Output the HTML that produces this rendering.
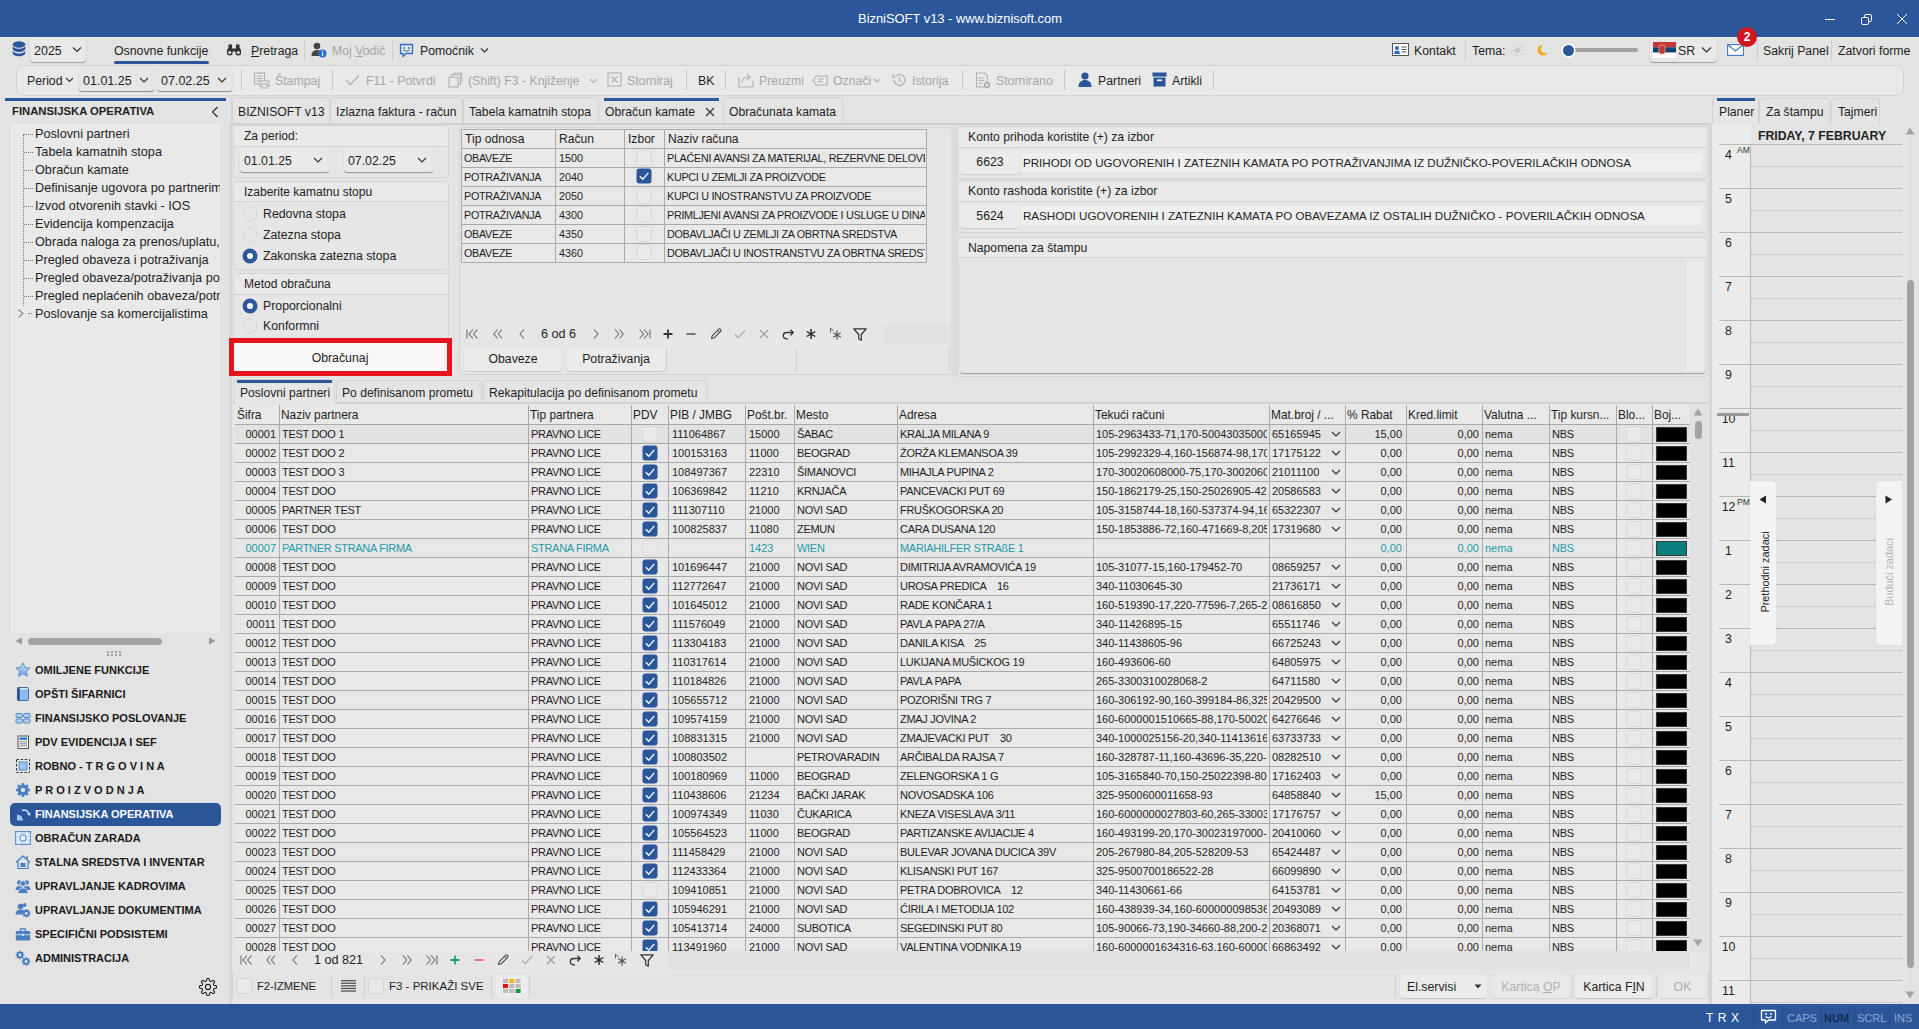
<!DOCTYPE html><html><head><meta charset="utf-8"><style>
html,body{margin:0;padding:0;}
body{width:1919px;height:1029px;position:relative;overflow:hidden;background:#e3e3e3;font-family:"Liberation Sans",sans-serif;font-size:12px;color:#1e1e1e;}
div{position:absolute;box-sizing:border-box;}
.t{white-space:nowrap;line-height:16px;height:16px;}
.dis{color:#a6a6a6;}
.g{font-size:11px;}
.cap{letter-spacing:-0.3px;}
.b{font-weight:bold;}
svg{overflow:visible;}
</style></head><body><div style="left:0px;top:0px;width:1919px;height:37px;background:#2b579a;"></div>
<div class="t" style="left:760px;top:11px;width:400px;text-align:center;color:#fff;font-size:12.9px;">BizniSOFT v13 - www.biznisoft.com</div>
<svg style="position:absolute;left:1824px;top:18px;" width="12" height="3" viewBox="0 0 12 3"><line x1="1" y1="1.5" x2="11" y2="1.5" stroke="#fff" stroke-width="1"/></svg>
<svg style="position:absolute;left:1860px;top:13px;" width="13" height="13" viewBox="0 0 13 13"><rect x="1.5" y="4.5" width="7" height="7" rx="1.3" fill="none" stroke="#fff" stroke-width="1"/><path d="M4.5 4.3V2.8a1.3 1.3 0 0 1 1.3-1.3h4.4a1.3 1.3 0 0 1 1.3 1.3v4.4a1.3 1.3 0 0 1-1.3 1.3H8.7" fill="none" stroke="#fff" stroke-width="1"/></svg>
<svg style="position:absolute;left:1896px;top:13px;" width="12" height="12" viewBox="0 0 12 12"><path d="M1 1L11 11M11 1L1 11" stroke="#fff" stroke-width="1"/></svg>
<div style="left:0px;top:37px;width:1919px;height:1px;background:#eeebe4;"></div>
<svg style="position:absolute;left:12px;top:41px;" width="15" height="16" viewBox="0 0 15 16"><ellipse cx="7" cy="3.5" rx="6.3" ry="3.2" fill="#2b579a"/><path d="M0.7 4.5v3.3c0 1.8 2.8 3.2 6.3 3.2s6.3-1.4 6.3-3.2V4.5c0 1.8-2.8 3.2-6.3 3.2S0.7 6.3 0.7 4.5z" fill="#2b579a"/><path d="M0.7 9.3v2.8c0 1.8 2.8 3.2 6.3 3.2s6.3-1.4 6.3-3.2V9.3c0 1.8-2.8 3.2-6.3 3.2S0.7 11.1 0.7 9.3z" fill="#2b579a"/></svg>
<div style="left:30px;top:38px;width:56px;height:24px;background:#e8e8e8;border-radius:4px;box-shadow:0 1px 1px #9a9a9a;"></div>
<div class="t" style="left:34px;top:42.8px;font-size:12.5px;">2025</div>
<svg style="position:absolute;left:72px;top:46px;" width="10" height="7" viewBox="0 0 10 7"><path d="M1 1.5L5 5.5L9 1.5" fill="none" stroke="#333" stroke-width="1.2"/></svg>
<div class="t" style="left:114px;top:42.8px;font-size:12.3px;">Osnovne funkcije</div>
<div style="left:114px;top:61px;width:95px;height:3px;background:#2b579a;border-radius:2px;"></div>
<svg style="position:absolute;left:226px;top:44px;" width="16" height="12" viewBox="0 0 16 12"><rect x="1" y="4" width="5.5" height="7.5" rx="2.5" fill="#333"/><rect x="9.5" y="4" width="5.5" height="7.5" rx="2.5" fill="#333"/><rect x="2.5" y="0.5" width="3.5" height="5" fill="#333"/><rect x="10" y="0.5" width="3.5" height="5" fill="#333"/><rect x="6" y="4.5" width="4" height="3" fill="#333"/><circle cx="3.7" cy="8.5" r="1.6" fill="#ddd"/><circle cx="12.3" cy="8.5" r="1.6" fill="#ddd"/></svg>
<div class="t" style="left:251px;top:42.8px;font-size:12.3px;"><u>P</u>retraga</div>
<div style="left:304px;top:40px;width:1px;height:21px;background:#cdcdcd;"></div>
<svg style="position:absolute;left:311px;top:42px;" width="16" height="16" viewBox="0 0 16 16"><circle cx="6" cy="4" r="3.3" fill="#444"/><path d="M0.5 14c0-4 2.5-6 5.5-6s4 1 4.5 2v4z" fill="#444"/><circle cx="11.5" cy="11.5" r="4" fill="#1e73d8"/><rect x="11" y="10.5" width="1.1" height="3.5" fill="#fff"/><rect x="11" y="8.8" width="1.1" height="1.1" fill="#fff"/></svg>
<div class="t dis" style="left:332px;top:42.8px;font-size:12.3px;">Moj <u>V</u>odič</div>
<div style="left:392px;top:40px;width:1px;height:21px;background:#cdcdcd;"></div>
<svg style="position:absolute;left:399px;top:43px;" width="15" height="15" viewBox="0 0 15 15"><path d="M1.5 1.5h12v9h-6.5l-3 3v-3h-2.5z" fill="none" stroke="#2b6cc4" stroke-width="1.3" stroke-linejoin="round"/><circle cx="5" cy="5" r="0.9" fill="#2b6cc4"/><circle cx="10" cy="5" r="0.9" fill="#2b6cc4"/><path d="M4.5 7.2q3 2 6 0" fill="none" stroke="#2b6cc4" stroke-width="1"/></svg>
<div class="t" style="left:420px;top:42.8px;font-size:12.3px;">Pomoćnik</div>
<svg style="position:absolute;left:480px;top:47px;" width="10" height="7" viewBox="0 0 10 7"><path d="M1 1.5L4.5 5L8 1.5" fill="none" stroke="#333" stroke-width="1.2"/></svg>
<svg style="position:absolute;left:1392px;top:43px;" width="17" height="13" viewBox="0 0 17 13"><rect x="0.5" y="0.5" width="16" height="12" fill="#fff" stroke="#555" stroke-width="1"/><circle cx="5" cy="5" r="2" fill="#2b6cc4"/><path d="M2 11c0-2.5 1.5-3.5 3-3.5s3 1 3 3.5z" fill="#2b6cc4"/><rect x="9.5" y="3.5" width="5" height="1" fill="#555"/><rect x="9.5" y="6" width="5" height="1" fill="#555"/><rect x="9.5" y="8.5" width="5" height="1" fill="#555"/></svg>
<div class="t" style="left:1414px;top:42.8px;font-size:12.3px;">Kontakt</div>
<div style="left:1465px;top:40px;width:1px;height:21px;background:#cdcdcd;"></div>
<div class="t" style="left:1472px;top:42.8px;font-size:12.3px;">Tema:</div>
<svg style="position:absolute;left:1511px;top:44px;" width="13" height="13" viewBox="0 0 13 13"><circle cx="6.5" cy="6.5" r="2.6" fill="#c8c8c8"/><line x1="10.50" y1="6.50" x2="12.50" y2="6.50" stroke="#c8c8c8" stroke-width="1.2"/><line x1="9.33" y1="9.33" x2="10.74" y2="10.74" stroke="#c8c8c8" stroke-width="1.2"/><line x1="6.50" y1="10.50" x2="6.50" y2="12.50" stroke="#c8c8c8" stroke-width="1.2"/><line x1="3.67" y1="9.33" x2="2.26" y2="10.74" stroke="#c8c8c8" stroke-width="1.2"/><line x1="2.50" y1="6.50" x2="0.50" y2="6.50" stroke="#c8c8c8" stroke-width="1.2"/><line x1="3.67" y1="3.67" x2="2.26" y2="2.26" stroke="#c8c8c8" stroke-width="1.2"/><line x1="6.50" y1="2.50" x2="6.50" y2="0.50" stroke="#c8c8c8" stroke-width="1.2"/><line x1="9.33" y1="3.67" x2="10.74" y2="2.26" stroke="#c8c8c8" stroke-width="1.2"/></svg>
<svg style="position:absolute;left:1536px;top:44px;" width="12" height="12" viewBox="0 0 12 12"><path d="M7 1A5.2 5.2 0 1 0 11.5 8.5A4.3 4.3 0 0 1 7 1z" fill="#f5a623"/></svg>
<div style="left:1568px;top:48px;width:70px;height:4px;background:#a0a0a0;border-radius:2px;"></div>
<div style="left:1563px;top:45px;width:11px;height:11px;background:#2b579a;border-radius:50%;box-shadow:0 0 0 1.5px #fff;"></div>
<div style="left:1650px;top:38px;width:67px;height:24px;background:#e8e8e8;border-radius:4px;box-shadow:0 1px 1px #9a9a9a;"></div>
<svg style="position:absolute;left:1653px;top:42px;" width="23" height="16" viewBox="0 0 23 16"><rect width="23" height="5.4" fill="#c6363c"/><rect y="5.3" width="23" height="5.4" fill="#0c4076"/><rect y="10.6" width="23" height="5.4" fill="#fff"/><rect x="6" y="3" width="6" height="9" rx="2" fill="#c6363c" stroke="#e8c35a" stroke-width="0.7"/></svg>
<div class="t" style="left:1678px;top:42.8px;font-size:12.3px;">SR</div>
<svg style="position:absolute;left:1701px;top:46px;" width="11" height="8" viewBox="0 0 11 8"><path d="M1 1.5L5.5 6L10 1.5" fill="none" stroke="#333" stroke-width="1.2"/></svg>
<svg style="position:absolute;left:1727px;top:44px;" width="17" height="12" viewBox="0 0 17 12"><rect x="0.6" y="0.6" width="15.8" height="10.8" fill="#fff" stroke="#3e78c8" stroke-width="1.1"/><path d="M0.8 0.8L8.5 7L16.2 0.8" fill="none" stroke="#3e78c8" stroke-width="1.1"/></svg>
<div style="left:1737px;top:27px;width:20px;height:20px;background:#d0171f;border-radius:50%;"></div>
<div class="t" style="left:1737px;top:29px;width:20px;text-align:center;color:#fff;font-weight:bold;font-size:12px;">2</div>
<div style="left:1757px;top:40px;width:1px;height:21px;background:#cdcdcd;"></div>
<div class="t" style="left:1763px;top:42.8px;font-size:12.3px;">Sakrij Panel</div>
<div style="left:1831px;top:40px;width:1px;height:21px;background:#cdcdcd;"></div>
<div class="t" style="left:1838px;top:42.8px;font-size:12.3px;">Zatvori forme</div>
<div style="left:16px;top:65px;width:1888px;height:31px;background:#e9e9e9;border:1px solid #d3d3d3;border-radius:8px;"></div>
<div class="t" style="left:27px;top:73px;font-size:12.3px;">Period</div>
<svg style="position:absolute;left:65px;top:77px;" width="9" height="6" viewBox="0 0 9 6"><path d="M1 1L4.5 4.5L8 1" fill="none" stroke="#333" stroke-width="1.1"/></svg>
<div style="left:79px;top:68px;width:75px;height:23px;background:#e6e6e6;border-radius:3px;box-shadow:0 1px 1px #8a8a8a;"></div>
<div class="t" style="left:83px;top:73px;font-size:12.5px;">01.01.25</div>
<svg style="position:absolute;left:139px;top:77px;" width="10" height="7" viewBox="0 0 10 7"><path d="M1 1L5 5L9 1" fill="none" stroke="#333" stroke-width="1.2"/></svg>
<div style="left:157px;top:68px;width:75px;height:23px;background:#e6e6e6;border-radius:3px;box-shadow:0 1px 1px #8a8a8a;"></div>
<div class="t" style="left:161px;top:73px;font-size:12.5px;">07.02.25</div>
<svg style="position:absolute;left:217px;top:77px;" width="10" height="7" viewBox="0 0 10 7"><path d="M1 1L5 5L9 1" fill="none" stroke="#333" stroke-width="1.2"/></svg>
<div style="left:241px;top:70px;width:1px;height:20px;background:#c8c8c8;"></div>
<svg style="position:absolute;left:253px;top:72px;" width="17" height="17" viewBox="0 0 17 17"><rect x="1.5" y="1" width="10" height="11" fill="none" stroke="#b0b0b0" stroke-width="1.1"/><path d="M3.5 4h6M3.5 6.5h6M3.5 9h4" stroke="#b0b0b0"/><rect x="7" y="9" width="9" height="5" fill="#e9e9e9" stroke="#b0b0b0" stroke-width="1.1"/><rect x="9" y="12" width="5" height="4" fill="#e9e9e9" stroke="#b0b0b0"/></svg>
<div class="t dis" style="left:275px;top:73px;font-size:12.3px;">Štampaj</div>
<div style="left:332px;top:70px;width:1px;height:20px;background:#c8c8c8;"></div>
<svg style="position:absolute;left:345px;top:74px;" width="15" height="12" viewBox="0 0 15 12"><path d="M1 6L5.5 10.5L14 1.5" fill="none" stroke="#b0b0b0" stroke-width="1.3"/></svg>
<div class="t dis" style="left:366px;top:73px;font-size:12.3px;">F11 - Potvrdi</div>
<svg style="position:absolute;left:448px;top:72px;" width="15" height="16" viewBox="0 0 15 16"><rect x="1" y="5" width="9" height="10" fill="none" stroke="#b0b0b0" stroke-width="1.1"/><path d="M3.5 5V2.5h9v10h-2.5" fill="none" stroke="#b0b0b0" stroke-width="1.1"/><path d="M6 3V1h8v9" fill="none" stroke="#b0b0b0" stroke-width="0.9"/></svg>
<div class="t dis" style="left:468px;top:73px;font-size:12.3px;">(Shift) F3 - Knjiženje</div>
<svg style="position:absolute;left:589px;top:78px;" width="9" height="6" viewBox="0 0 9 6"><path d="M1 1L4.5 4.5L8 1" fill="none" stroke="#b0b0b0" stroke-width="1.1"/></svg>
<svg style="position:absolute;left:607px;top:72px;" width="15" height="15" viewBox="0 0 15 15"><rect x="1" y="1" width="13" height="13" fill="none" stroke="#b0b0b0" stroke-width="1.1"/><path d="M4.5 4.5L10.5 10.5M10.5 4.5L4.5 10.5" stroke="#b0b0b0" stroke-width="1.1"/></svg>
<div class="t dis" style="left:627px;top:73px;font-size:12.3px;">Storniraj</div>
<div style="left:686px;top:70px;width:1px;height:20px;background:#c8c8c8;"></div>
<div class="t" style="left:698px;top:73px;font-size:12.3px;">BK</div>
<div style="left:725px;top:70px;width:1px;height:20px;background:#c8c8c8;"></div>
<svg style="position:absolute;left:738px;top:72px;" width="16" height="16" viewBox="0 0 16 16"><path d="M1 5v10h14V9" fill="none" stroke="#b0b0b0" stroke-width="1.1"/><path d="M4 11c0-4 3-6 7-6" fill="none" stroke="#b0b0b0" stroke-width="1.1"/><path d="M9 2l3 3-3 3" fill="none" stroke="#b0b0b0" stroke-width="1.1"/></svg>
<div class="t dis" style="left:759px;top:73px;font-size:12.3px;">Preuzmi</div>
<svg style="position:absolute;left:812px;top:73px;" width="17" height="13" viewBox="0 0 17 13"><path d="M4 3h11v9H4L1 7.5z" fill="none" stroke="#b0b0b0" stroke-width="1.1"/><path d="M6 6h6M6 8.5h5" stroke="#b0b0b0"/></svg>
<div class="t dis" style="left:833px;top:73px;font-size:12.3px;">Označi</div>
<svg style="position:absolute;left:873px;top:78px;" width="8" height="6" viewBox="0 0 8 6"><path d="M1 1L4 4L7 1" fill="none" stroke="#b0b0b0" stroke-width="1.1"/></svg>
<svg style="position:absolute;left:891px;top:72px;" width="16" height="16" viewBox="0 0 16 16"><path d="M3 8a5.5 5.5 0 1 0 1.6-3.9" fill="none" stroke="#b0b0b0" stroke-width="1.3"/><path d="M2 2v3.5h3.5" fill="none" stroke="#b0b0b0" stroke-width="1.2"/><path d="M8.5 5v3.5l2.5 1.5" fill="none" stroke="#b0b0b0" stroke-width="1.2"/></svg>
<div class="t dis" style="left:912px;top:73px;font-size:12.3px;">Istorija</div>
<div style="left:962px;top:70px;width:1px;height:20px;background:#c8c8c8;"></div>
<svg style="position:absolute;left:975px;top:72px;" width="16" height="17" viewBox="0 0 16 17"><path d="M1.5 1h8l3 3v11h-11z" fill="none" stroke="#b0b0b0" stroke-width="1.1"/><path d="M3.5 6h6M3.5 8.5h6M3.5 11h4" stroke="#b0b0b0"/><circle cx="12" cy="13" r="3.2" fill="#b0b0b0"/><path d="M10.7 11.7l2.6 2.6M13.3 11.7l-2.6 2.6" stroke="#fff" stroke-width="0.9"/></svg>
<div class="t dis" style="left:996px;top:73px;font-size:12.3px;">Stornirano</div>
<div style="left:1064px;top:70px;width:1px;height:20px;background:#c8c8c8;"></div>
<svg style="position:absolute;left:1078px;top:72px;" width="14" height="15" viewBox="0 0 14 15"><circle cx="7" cy="4" r="3.6" fill="#2b579a"/><path d="M0.5 15c0-5 3-7 6.5-7s6.5 2 6.5 7z" fill="#2b579a"/></svg>
<div class="t" style="left:1098px;top:73px;font-size:12.3px;">Partneri</div>
<svg style="position:absolute;left:1152px;top:72px;" width="15" height="15" viewBox="0 0 15 15"><rect x="0.5" y="0.5" width="14" height="4" fill="#2b579a"/><rect x="1.5" y="5.5" width="12" height="9" fill="#2b579a"/><rect x="5" y="7.5" width="5" height="1.6" fill="#fff"/></svg>
<div class="t" style="left:1172px;top:73px;font-size:12.3px;">Artikli</div>
<div style="left:1213px;top:70px;width:1px;height:20px;background:#c8c8c8;"></div>
<div style="left:0px;top:1004px;width:1919px;height:25px;background:#2b579a;"></div>
<div class="t" style="left:1706px;top:1010px;color:#fff;font-size:12px;letter-spacing:0.6px;">T&nbsp;R&nbsp;X</div>
<div style="left:1753px;top:1006px;width:1px;height:22px;background:#234a84;"></div>
<svg style="position:absolute;left:1760px;top:1009px;" width="17" height="17" viewBox="0 0 17 17"><path d="M1.5 1.5h14v9.5h-7l-3 3v-3h-4z" fill="none" stroke="#fff" stroke-width="1.3" stroke-linejoin="round"/><circle cx="6" cy="5" r="1" fill="#fff"/><circle cx="11" cy="5" r="1" fill="#fff"/><path d="M5.5 7.5q3 2.2 6 0" fill="none" stroke="#fff" stroke-width="1.1"/></svg>
<div style="left:1782px;top:1006px;width:1px;height:22px;background:#234a84;"></div>
<div class="t" style="left:1787px;top:1010px;font-size:11px;color:#8fa8cf;">CAPS</div>
<div style="left:1821px;top:1006px;width:1px;height:22px;background:#234a84;"></div>
<div class="t" style="left:1824px;top:1010px;font-size:11px;color:#0a1a33;">NUM</div>
<div style="left:1854px;top:1006px;width:1px;height:22px;background:#234a84;"></div>
<div class="t" style="left:1857px;top:1010px;font-size:11px;color:#8fa8cf;">SCRL</div>
<div style="left:1889px;top:1006px;width:1px;height:22px;background:#234a84;"></div>
<div class="t" style="left:1894px;top:1010px;font-size:11px;color:#8fa8cf;">INS</div>
<div style="left:5px;top:98px;width:221px;height:3px;background:#2b579a;"></div>
<div class="t" style="left:12px;top:103px;font-size:11.3px;font-weight:bold;color:#222;">FINANSIJSKA OPERATIVA</div>
<svg style="position:absolute;left:211px;top:106px;" width="8" height="12" viewBox="0 0 8 12"><path d="M6.5 1L1.5 6L6.5 11" fill="none" stroke="#333" stroke-width="1.2"/></svg>
<div style="left:11px;top:124px;width:209px;height:509px;background:#e9e9e9;"></div>
<div style="left:11px;top:124px;width:209px;height:509px;overflow:hidden;">
<div style="left:12px;top:10px;width:0;height:172px;border-left:1px dotted #777;"></div>
<div style="left:13px;top:9.5px;width:9px;height:0;border-top:1px dotted #777;"></div>
<div class="t" style="left:24px;top:1.5px;font-size:12.7px;">Poslovni partneri</div>
<div style="left:13px;top:27.5px;width:9px;height:0;border-top:1px dotted #777;"></div>
<div class="t" style="left:24px;top:19.5px;font-size:12.7px;">Tabela kamatnih stopa</div>
<div style="left:13px;top:45.5px;width:9px;height:0;border-top:1px dotted #777;"></div>
<div class="t" style="left:24px;top:37.5px;font-size:12.7px;">Obračun kamate</div>
<div style="left:13px;top:63.5px;width:9px;height:0;border-top:1px dotted #777;"></div>
<div class="t" style="left:24px;top:55.5px;font-size:12.7px;">Definisanje ugovora po partnerima</div>
<div style="left:13px;top:81.5px;width:9px;height:0;border-top:1px dotted #777;"></div>
<div class="t" style="left:24px;top:73.5px;font-size:12.7px;">Izvod otvorenih stavki - IOS</div>
<div style="left:13px;top:99.5px;width:9px;height:0;border-top:1px dotted #777;"></div>
<div class="t" style="left:24px;top:91.5px;font-size:12.7px;">Evidencija kompenzacija</div>
<div style="left:13px;top:117.5px;width:9px;height:0;border-top:1px dotted #777;"></div>
<div class="t" style="left:24px;top:109.5px;font-size:12.7px;">Obrada naloga za prenos/uplatu, isplatu</div>
<div style="left:13px;top:135.5px;width:9px;height:0;border-top:1px dotted #777;"></div>
<div class="t" style="left:24px;top:127.5px;font-size:12.7px;">Pregled obaveza i potraživanja</div>
<div style="left:13px;top:153.5px;width:9px;height:0;border-top:1px dotted #777;"></div>
<div class="t" style="left:24px;top:145.5px;font-size:12.7px;">Pregled obaveza/potraživanja po partnerima</div>
<div style="left:13px;top:171.5px;width:9px;height:0;border-top:1px dotted #777;"></div>
<div class="t" style="left:24px;top:163.5px;font-size:12.7px;">Pregled neplaćenih obaveza/potraživanja</div>
<div class="t" style="left:24px;top:181.5px;font-size:12.7px;">Poslovanje sa komercijalistima</div>
</div>
<svg style="position:absolute;left:17px;top:308px;" width="8" height="11" viewBox="0 0 8 11"><path d="M1.5 1.5L6 5.5L1.5 9.5" fill="none" stroke="#888" stroke-width="1.2"/></svg>
<div style="left:28px;top:313px;width:4px;height:0;border-top:1px dotted #777;"></div>
<svg style="position:absolute;left:15px;top:637px;" width="8" height="8" viewBox="0 0 8 8"><path d="M7 0.5L0.5 4L7 7.5z" fill="#9a9a9a"/></svg>
<div style="left:28px;top:638px;width:134px;height:7px;background:#a3a3a3;border-radius:4px;"></div>
<svg style="position:absolute;left:208px;top:637px;" width="8" height="8" viewBox="0 0 8 8"><path d="M1 0.5L7.5 4L1 7.5z" fill="#9a9a9a"/></svg>
<div style="left:107px;top:651px;width:2px;height:2px;background:#a0a0a0;"></div>
<div style="left:107px;top:654px;width:2px;height:2px;background:#a0a0a0;"></div>
<div style="left:111px;top:651px;width:2px;height:2px;background:#a0a0a0;"></div>
<div style="left:111px;top:654px;width:2px;height:2px;background:#a0a0a0;"></div>
<div style="left:115px;top:651px;width:2px;height:2px;background:#a0a0a0;"></div>
<div style="left:115px;top:654px;width:2px;height:2px;background:#a0a0a0;"></div>
<div style="left:119px;top:651px;width:2px;height:2px;background:#a0a0a0;"></div>
<div style="left:119px;top:654px;width:2px;height:2px;background:#a0a0a0;"></div>
<svg style="position:absolute;left:15px;top:662px;" width="16" height="16" viewBox="0 0 16 16"><defs><linearGradient id="sg" x1="0" y1="0" x2="0" y2="1"><stop offset="0" stop-color="#cfe3fa"/><stop offset="1" stop-color="#6d9fe0"/></linearGradient></defs><path d="M8 0.8l2.1 4.6 5 .6-3.7 3.4 1 4.9L8 11.8 3.6 14.3l1-4.9L0.9 6l5-.6z" fill="url(#sg)" stroke="#5a88c8" stroke-width="0.9"/></svg>
<div class="t" style="left:35px;top:661.5px;font-size:11px;font-weight:bold;color:#1a1a1a;">OMILJENE FUNKCIJE</div>
<svg style="position:absolute;left:15px;top:686px;" width="16" height="16" viewBox="0 0 16 16"><rect x="2.5" y="1.5" width="11" height="13" rx="1" fill="#8dbdf0" stroke="#3a5f96" stroke-width="0.9"/><rect x="2.5" y="1.5" width="2.2" height="13" fill="#2c4a78"/><rect x="4.7" y="2.2" width="8.3" height="1.2" fill="#e6f1fd"/></svg>
<div class="t" style="left:35px;top:685.5px;font-size:11px;font-weight:bold;color:#1a1a1a;">OPŠTI ŠIFARNICI</div>
<svg style="position:absolute;left:15px;top:710px;" width="16" height="16" viewBox="0 0 16 16"><rect x="1" y="3.5" width="6.3" height="4" rx="0.8" fill="#a9cdf3" stroke="#4a7fc1" stroke-width="0.9"/><rect x="8.7" y="3.5" width="6.3" height="4" rx="0.8" fill="#a9cdf3" stroke="#4a7fc1" stroke-width="0.9"/><rect x="1" y="9" width="6.3" height="4" rx="0.8" fill="#a9cdf3" stroke="#4a7fc1" stroke-width="0.9"/><rect x="8.7" y="9" width="6.3" height="4" rx="0.8" fill="#a9cdf3" stroke="#4a7fc1" stroke-width="0.9"/></svg>
<div class="t" style="left:35px;top:709.5px;font-size:11px;font-weight:bold;color:#1a1a1a;">FINANSIJSKO POSLOVANJE</div>
<svg style="position:absolute;left:15px;top:734px;" width="16" height="16" viewBox="0 0 16 16"><rect x="3" y="2" width="10.5" height="12.5" fill="#f4f4f4" stroke="#555" stroke-width="1"/><rect x="4.5" y="3.5" width="7.5" height="2.3" fill="#1e6fd0"/><path d="M4.5 7.8h7.5M4.5 9.8h7.5M4.5 11.8h7.5" stroke="#777" stroke-width="0.9"/></svg>
<div class="t" style="left:35px;top:733.5px;font-size:11px;font-weight:bold;color:#1a1a1a;">PDV EVIDENCIJA I SEF</div>
<svg style="position:absolute;left:15px;top:758px;" width="16" height="16" viewBox="0 0 16 16"><rect x="1.5" y="1.5" width="13" height="13" fill="none" stroke="#333" stroke-width="1" stroke-dasharray="2.5 1.6"/><rect x="4" y="4" width="8" height="8" fill="#9cc5f0" stroke="#4a7fc1" stroke-width="0.8"/></svg>
<div class="t" style="left:35px;top:757.5px;font-size:11px;font-weight:bold;color:#1a1a1a;">ROBNO - T R G O V I N A</div>
<svg style="position:absolute;left:15px;top:782px;" width="16" height="16" viewBox="0 0 16 16"><circle cx="8" cy="8" r="5.3" fill="#4a7fc1"/><rect x="6.7" y="1.1" width="2.6" height="2.8000000000000003" fill="#4a7fc1" transform="rotate(0 8 8)"/><rect x="6.7" y="1.1" width="2.6" height="2.8000000000000003" fill="#4a7fc1" transform="rotate(45 8 8)"/><rect x="6.7" y="1.1" width="2.6" height="2.8000000000000003" fill="#4a7fc1" transform="rotate(90 8 8)"/><rect x="6.7" y="1.1" width="2.6" height="2.8000000000000003" fill="#4a7fc1" transform="rotate(135 8 8)"/><rect x="6.7" y="1.1" width="2.6" height="2.8000000000000003" fill="#4a7fc1" transform="rotate(180 8 8)"/><rect x="6.7" y="1.1" width="2.6" height="2.8000000000000003" fill="#4a7fc1" transform="rotate(225 8 8)"/><rect x="6.7" y="1.1" width="2.6" height="2.8000000000000003" fill="#4a7fc1" transform="rotate(270 8 8)"/><rect x="6.7" y="1.1" width="2.6" height="2.8000000000000003" fill="#4a7fc1" transform="rotate(315 8 8)"/><circle cx="8" cy="8" r="2.2" fill="#e3e3e3"/></svg>
<div class="t" style="left:35px;top:781.5px;font-size:11px;font-weight:bold;color:#1a1a1a;">P R O I Z V O D N J A</div>
<div style="left:10px;top:802.5px;width:211px;height:23px;background:#2b579a;border-radius:5px;"></div>
<svg style="position:absolute;left:15px;top:806px;" width="16" height="16" viewBox="0 0 16 16"><path d="M2 14.5V8.5a6 6 0 0 1 6 6z" fill="#9cc5f0"/><path d="M7 4.5a5 5 0 0 1 7 3.5" fill="none" stroke="#cfe3fa" stroke-width="1.5"/><path d="M12 7.5l2 2.5 2-2.5" fill="#cfe3fa"/></svg>
<div class="t" style="left:35px;top:805.5px;font-size:11px;font-weight:bold;color:#fff;">FINANSIJSKA OPERATIVA</div>
<svg style="position:absolute;left:15px;top:830px;" width="16" height="16" viewBox="0 0 16 16"><rect x="0.5" y="1.5" width="15" height="13" fill="#bcd8f6" stroke="#4a7fc1" stroke-width="0.9"/><path d="M0.5 5h15M0.5 8.5h15M0.5 12h15M4 1.5v13M12 1.5v13" stroke="#fff" stroke-width="0.8"/><circle cx="8" cy="8" r="3.2" fill="#eaf3fd" stroke="#4a7fc1" stroke-width="1"/></svg>
<div class="t" style="left:35px;top:829.5px;font-size:11px;font-weight:bold;color:#1a1a1a;">OBRAČUN ZARADA</div>
<svg style="position:absolute;left:15px;top:854px;" width="16" height="16" viewBox="0 0 16 16"><path d="M1 8.5L8 2L15 8.5" fill="none" stroke="#4a7fc1" stroke-width="1.3"/><path d="M12 2v3" stroke="#4a7fc1" stroke-width="1.5"/><path d="M3 7.5v7h10v-7" fill="none" stroke="#4a7fc1" stroke-width="1.2"/><rect x="5.5" y="9" width="5" height="4" fill="#4a7fc1"/></svg>
<div class="t" style="left:35px;top:853.5px;font-size:11px;font-weight:bold;color:#1a1a1a;">STALNA SREDSTVA I INVENTAR</div>
<svg style="position:absolute;left:15px;top:878px;" width="16" height="16" viewBox="0 0 16 16"><circle cx="4.3" cy="4.5" r="2.3" fill="#4a7fc1"/><circle cx="11.7" cy="4.5" r="2.3" fill="#4a7fc1"/><path d="M0.5 12c0-2.5 1.8-4 3.8-4s3.8 1.5 3.8 4zM7.9 12c0-2.5 1.8-4 3.8-4s3.8 1.5 3.8 4z" fill="#4a7fc1"/><circle cx="8" cy="5.5" r="2.8" fill="#4a7fc1" stroke="#e3e3e3" stroke-width="0.8"/><path d="M3 15.5c0-3.5 2.2-5.5 5-5.5s5 2 5 5.5z" fill="#4a7fc1" stroke="#e3e3e3" stroke-width="0.8"/></svg>
<div class="t" style="left:35px;top:877.5px;font-size:11px;font-weight:bold;color:#1a1a1a;">UPRAVLJANJE KADROVIMA</div>
<svg style="position:absolute;left:15px;top:902px;" width="16" height="16" viewBox="0 0 16 16"><circle cx="5.5" cy="4.5" r="2.8" fill="#4a7fc1"/><circle cx="9.5" cy="3" r="2" fill="#4a7fc1"/><path d="M0.5 12.5c0-3 2.2-5 5-5 1.5 0 2.5.5 3.3 1.3L7.5 12.5z" fill="#4a7fc1"/><circle cx="11.3" cy="11.3" r="3.3" fill="#4a7fc1"/><rect x="10.5" y="7.1" width="1.6" height="2.1" fill="#4a7fc1" transform="rotate(0 11.3 11.3)"/><rect x="10.5" y="7.1" width="1.6" height="2.1" fill="#4a7fc1" transform="rotate(45 11.3 11.3)"/><rect x="10.5" y="7.1" width="1.6" height="2.1" fill="#4a7fc1" transform="rotate(90 11.3 11.3)"/><rect x="10.5" y="7.1" width="1.6" height="2.1" fill="#4a7fc1" transform="rotate(135 11.3 11.3)"/><rect x="10.5" y="7.1" width="1.6" height="2.1" fill="#4a7fc1" transform="rotate(180 11.3 11.3)"/><rect x="10.5" y="7.1" width="1.6" height="2.1" fill="#4a7fc1" transform="rotate(225 11.3 11.3)"/><rect x="10.5" y="7.1" width="1.6" height="2.1" fill="#4a7fc1" transform="rotate(270 11.3 11.3)"/><rect x="10.5" y="7.1" width="1.6" height="2.1" fill="#4a7fc1" transform="rotate(315 11.3 11.3)"/><circle cx="11.3" cy="11.3" r="1.4" fill="#e3e3e3"/></svg>
<div class="t" style="left:35px;top:901.5px;font-size:11px;font-weight:bold;color:#1a1a1a;">UPRAVLJANJE DOKUMENTIMA</div>
<svg style="position:absolute;left:15px;top:926px;" width="16" height="16" viewBox="0 0 16 16"><rect x="0.8" y="5" width="14.4" height="9.5" rx="0.8" fill="#4a7fc1"/><path d="M5.5 5V2.8h5V5" fill="none" stroke="#4a7fc1" stroke-width="1.3"/><rect x="0.8" y="8.3" width="14.4" height="0.9" fill="#e3e3e3"/><rect x="7" y="7.8" width="2" height="2" fill="#e3e3e3"/></svg>
<div class="t" style="left:35px;top:925.5px;font-size:11px;font-weight:bold;color:#1a1a1a;">SPECIFIČNI PODSISTEMI</div>
<svg style="position:absolute;left:15px;top:950px;" width="16" height="16" viewBox="0 0 16 16"><circle cx="5" cy="5" r="3.3" fill="#4a7fc1"/><rect x="4.2" y="0.7000000000000001" width="1.6" height="2.2" fill="#4a7fc1" transform="rotate(0 5 5)"/><rect x="4.2" y="0.7000000000000001" width="1.6" height="2.2" fill="#4a7fc1" transform="rotate(45 5 5)"/><rect x="4.2" y="0.7000000000000001" width="1.6" height="2.2" fill="#4a7fc1" transform="rotate(90 5 5)"/><rect x="4.2" y="0.7000000000000001" width="1.6" height="2.2" fill="#4a7fc1" transform="rotate(135 5 5)"/><rect x="4.2" y="0.7000000000000001" width="1.6" height="2.2" fill="#4a7fc1" transform="rotate(180 5 5)"/><rect x="4.2" y="0.7000000000000001" width="1.6" height="2.2" fill="#4a7fc1" transform="rotate(225 5 5)"/><rect x="4.2" y="0.7000000000000001" width="1.6" height="2.2" fill="#4a7fc1" transform="rotate(270 5 5)"/><rect x="4.2" y="0.7000000000000001" width="1.6" height="2.2" fill="#4a7fc1" transform="rotate(315 5 5)"/><circle cx="5" cy="5" r="1.4" fill="#e3e3e3"/><circle cx="11" cy="11.5" r="3.3" fill="#4a7fc1"/><rect x="10.2" y="7.199999999999999" width="1.6" height="2.2" fill="#4a7fc1" transform="rotate(0 11 11.5)"/><rect x="10.2" y="7.199999999999999" width="1.6" height="2.2" fill="#4a7fc1" transform="rotate(45 11 11.5)"/><rect x="10.2" y="7.199999999999999" width="1.6" height="2.2" fill="#4a7fc1" transform="rotate(90 11 11.5)"/><rect x="10.2" y="7.199999999999999" width="1.6" height="2.2" fill="#4a7fc1" transform="rotate(135 11 11.5)"/><rect x="10.2" y="7.199999999999999" width="1.6" height="2.2" fill="#4a7fc1" transform="rotate(180 11 11.5)"/><rect x="10.2" y="7.199999999999999" width="1.6" height="2.2" fill="#4a7fc1" transform="rotate(225 11 11.5)"/><rect x="10.2" y="7.199999999999999" width="1.6" height="2.2" fill="#4a7fc1" transform="rotate(270 11 11.5)"/><rect x="10.2" y="7.199999999999999" width="1.6" height="2.2" fill="#4a7fc1" transform="rotate(315 11 11.5)"/><circle cx="11" cy="11.5" r="1.4" fill="#e3e3e3"/></svg>
<div class="t" style="left:35px;top:949.5px;font-size:11px;font-weight:bold;color:#1a1a1a;">ADMINISTRACIJA</div>
<svg style="position:absolute;left:198px;top:977px;" width="20" height="20" viewBox="0 0 20 20"><polygon points="10.00,1.45 10.22,1.46 10.45,1.48 10.67,1.52 10.88,1.59 11.09,1.75 11.26,2.04 11.38,2.54 11.46,3.14 11.53,3.64 11.62,3.94 11.75,4.11 11.88,4.21 12.02,4.28 12.17,4.35 12.32,4.41 12.46,4.47 12.61,4.53 12.76,4.57 12.93,4.60 13.14,4.57 13.42,4.42 13.82,4.12 14.30,3.75 14.74,3.48 15.07,3.39 15.32,3.43 15.53,3.53 15.71,3.66 15.88,3.80 16.05,3.95 16.20,4.12 16.34,4.29 16.47,4.47 16.57,4.68 16.61,4.93 16.52,5.26 16.25,5.70 15.88,6.18 15.58,6.58 15.43,6.86 15.40,7.07 15.43,7.24 15.47,7.39 15.53,7.54 15.59,7.68 15.65,7.83 15.72,7.98 15.79,8.12 15.89,8.25 16.06,8.38 16.36,8.47 16.86,8.54 17.46,8.62 17.96,8.74 18.25,8.91 18.41,9.12 18.48,9.33 18.52,9.55 18.54,9.78 18.55,10.00 18.54,10.22 18.52,10.45 18.48,10.67 18.41,10.88 18.25,11.09 17.96,11.26 17.46,11.38 16.86,11.46 16.36,11.53 16.06,11.62 15.89,11.75 15.79,11.88 15.72,12.02 15.65,12.17 15.59,12.32 15.53,12.46 15.47,12.61 15.43,12.76 15.40,12.93 15.43,13.14 15.58,13.42 15.88,13.82 16.25,14.30 16.52,14.74 16.61,15.07 16.57,15.32 16.47,15.53 16.34,15.71 16.20,15.88 16.05,16.05 15.88,16.20 15.71,16.34 15.53,16.47 15.32,16.57 15.07,16.61 14.74,16.52 14.30,16.25 13.82,15.88 13.42,15.58 13.14,15.43 12.93,15.40 12.76,15.43 12.61,15.47 12.46,15.53 12.32,15.59 12.17,15.65 12.02,15.72 11.88,15.79 11.75,15.89 11.62,16.06 11.53,16.36 11.46,16.86 11.38,17.46 11.26,17.96 11.09,18.25 10.88,18.41 10.67,18.48 10.45,18.52 10.22,18.54 10.00,18.55 9.78,18.54 9.55,18.52 9.33,18.48 9.12,18.41 8.91,18.25 8.74,17.96 8.62,17.46 8.54,16.86 8.47,16.36 8.38,16.06 8.25,15.89 8.12,15.79 7.98,15.72 7.83,15.65 7.68,15.59 7.54,15.53 7.39,15.47 7.24,15.43 7.07,15.40 6.86,15.43 6.58,15.58 6.18,15.88 5.70,16.25 5.26,16.52 4.93,16.61 4.68,16.57 4.47,16.47 4.29,16.34 4.12,16.20 3.95,16.05 3.80,15.88 3.66,15.71 3.53,15.53 3.43,15.32 3.39,15.07 3.48,14.74 3.75,14.30 4.12,13.82 4.42,13.42 4.57,13.14 4.60,12.93 4.57,12.76 4.53,12.61 4.47,12.46 4.41,12.32 4.35,12.17 4.28,12.02 4.21,11.88 4.11,11.75 3.94,11.62 3.64,11.53 3.14,11.46 2.54,11.38 2.04,11.26 1.75,11.09 1.59,10.88 1.52,10.67 1.48,10.45 1.46,10.22 1.45,10.00 1.46,9.78 1.48,9.55 1.52,9.33 1.59,9.12 1.75,8.91 2.04,8.74 2.54,8.62 3.14,8.54 3.64,8.47 3.94,8.38 4.11,8.25 4.21,8.12 4.28,7.98 4.35,7.83 4.41,7.68 4.47,7.54 4.53,7.39 4.57,7.24 4.60,7.07 4.57,6.86 4.42,6.58 4.12,6.18 3.75,5.70 3.48,5.26 3.39,4.93 3.43,4.68 3.53,4.47 3.66,4.29 3.80,4.12 3.95,3.95 4.12,3.80 4.29,3.66 4.47,3.53 4.68,3.43 4.93,3.39 5.26,3.48 5.70,3.75 6.18,4.12 6.58,4.42 6.86,4.57 7.07,4.60 7.24,4.57 7.39,4.53 7.54,4.47 7.68,4.41 7.83,4.35 7.98,4.28 8.12,4.21 8.25,4.11 8.38,3.94 8.47,3.64 8.54,3.14 8.62,2.54 8.74,2.04 8.91,1.75 9.12,1.59 9.33,1.52 9.55,1.48 9.78,1.46" fill="none" stroke="#222" stroke-width="1.1" stroke-linejoin="round"/><circle cx="10" cy="10" r="2.6" fill="none" stroke="#222" stroke-width="1.1"/></svg>
<div style="left:229px;top:124px;width:3px;height:880px;background:#d6d6d6;"></div>
<div style="left:231px;top:97px;width:1px;height:27px;background:#d4d4d4;"></div>
<div style="left:232px;top:97px;width:98px;height:28px;border:1px solid #d2d2d2;border-bottom:none;border-radius:4px 4px 0 0;background:#e4e4e4;"></div>
<div class="t" style="left:238px;top:104px;font-size:12.2px;">BIZNISOFT v13</div>
<div style="left:330px;top:97px;width:133px;height:28px;border:1px solid #d2d2d2;border-bottom:none;border-radius:4px 4px 0 0;background:#e4e4e4;"></div>
<div class="t" style="left:336px;top:104px;font-size:12.2px;">Izlazna faktura - račun</div>
<div style="left:463px;top:97px;width:136px;height:28px;border:1px solid #d2d2d2;border-bottom:none;border-radius:4px 4px 0 0;background:#e4e4e4;"></div>
<div class="t" style="left:469px;top:104px;font-size:12.2px;">Tabela kamatnih stopa</div>
<div style="left:604px;top:98px;width:115px;height:3px;background:#2b579a;"></div>
<div class="t" style="left:605px;top:104px;font-size:12.2px;">Obračun kamate</div>
<div style="left:723px;top:97px;width:120px;height:28px;border:1px solid #d2d2d2;border-bottom:none;border-radius:4px 4px 0 0;background:#e4e4e4;"></div>
<div class="t" style="left:729px;top:104px;font-size:12.2px;">Obračunata kamata</div>
<svg style="position:absolute;left:705px;top:107px;" width="10" height="10" viewBox="0 0 10 10"><path d="M1 1L9 9M9 1L1 9" stroke="#333" stroke-width="1.2"/></svg>
<div style="left:232px;top:123px;width:1477px;height:2px;background:#cfcfcf;"></div>
<div style="left:233px;top:125px;width:216px;height:53px;background:#e6e6e6;border:1px solid #d4d4d4;border-radius:4px;"></div>
<div style="left:234px;top:126px;width:214px;height:20px;background:#e9e9e9;border-radius:3px 3px 0 0;"></div>
<div style="left:234px;top:146px;width:214px;height:1px;background:#d4d4d4;"></div>
<div class="t" style="left:244px;top:128px;font-size:12px;">Za period:</div>
<div style="left:240px;top:150px;width:89px;height:22px;background:#e9e9e9;border-radius:3px;box-shadow:0 1px 1px #8f8f8f;"></div>
<div class="t" style="left:244px;top:153px;font-size:12.3px;">01.01.25</div>
<svg style="position:absolute;left:313px;top:157px;" width="10" height="7" viewBox="0 0 10 7"><path d="M1 1L5 5L9 1" fill="none" stroke="#333" stroke-width="1.2"/></svg>
<div style="left:344px;top:150px;width:89px;height:22px;background:#e9e9e9;border-radius:3px;box-shadow:0 1px 1px #8f8f8f;"></div>
<div class="t" style="left:348px;top:153px;font-size:12.3px;">07.02.25</div>
<svg style="position:absolute;left:417px;top:157px;" width="10" height="7" viewBox="0 0 10 7"><path d="M1 1L5 5L9 1" fill="none" stroke="#333" stroke-width="1.2"/></svg>
<div style="left:233px;top:181px;width:216px;height:89px;background:#e6e6e6;border:1px solid #d4d4d4;border-radius:4px;"></div>
<div style="left:234px;top:182px;width:214px;height:19px;background:#e9e9e9;border-radius:3px 3px 0 0;"></div>
<div style="left:234px;top:201px;width:214px;height:1px;background:#d4d4d4;"></div>
<div class="t" style="left:244px;top:184px;font-size:12px;">Izaberite kamatnu stopu</div>
<svg style="position:absolute;left:242px;top:206px;" width="16" height="16" viewBox="0 0 16 16"><circle cx="8" cy="8" r="7" fill="#e6e6e6" stroke="#d6d6d6" stroke-width="1"/></svg>
<div class="t" style="left:263px;top:206px;font-size:12.3px;">Redovna stopa</div>
<svg style="position:absolute;left:242px;top:227px;" width="16" height="16" viewBox="0 0 16 16"><circle cx="8" cy="8" r="7" fill="#e6e6e6" stroke="#d6d6d6" stroke-width="1"/></svg>
<div class="t" style="left:263px;top:227px;font-size:12.3px;">Zatezna stopa</div>
<svg style="position:absolute;left:242px;top:248px;" width="16" height="16" viewBox="0 0 16 16"><circle cx="8" cy="8" r="7.5" fill="#2b579a"/><circle cx="8" cy="8" r="3" fill="#fff"/></svg>
<div class="t" style="left:263px;top:248px;font-size:12.3px;">Zakonska zatezna stopa</div>
<div style="left:233px;top:273px;width:216px;height:72px;background:#e6e6e6;border:1px solid #d4d4d4;border-radius:4px;"></div>
<div style="left:234px;top:274px;width:214px;height:20px;background:#e9e9e9;border-radius:3px 3px 0 0;"></div>
<div style="left:234px;top:294px;width:214px;height:1px;background:#d4d4d4;"></div>
<div class="t" style="left:244px;top:276px;font-size:12px;">Metod obračuna</div>
<svg style="position:absolute;left:242px;top:298px;" width="16" height="16" viewBox="0 0 16 16"><circle cx="8" cy="8" r="7.5" fill="#2b579a"/><circle cx="8" cy="8" r="3" fill="#fff"/></svg>
<div class="t" style="left:263px;top:297.5px;font-size:12.3px;">Proporcionalni</div>
<svg style="position:absolute;left:242px;top:318px;" width="16" height="16" viewBox="0 0 16 16"><circle cx="8" cy="8" r="7" fill="#e6e6e6" stroke="#d6d6d6" stroke-width="1"/></svg>
<div class="t" style="left:263px;top:317.5px;font-size:12.3px;">Konformni</div>
<div style="left:229px;top:338px;width:223px;height:38px;background:#f8f8f8;border:5px solid #e8141c;"></div>
<div class="t" style="left:240px;top:350px;width:200px;text-align:center;font-size:12.3px;">Obračunaj</div>
<div style="left:459px;top:127px;width:493px;height:248px;background:#e6e6e6;border:1px solid #d4d4d4;border-radius:3px;"></div>
<div style="left:461px;top:129px;width:466px;height:134px;background:#e8e8e8;border:1px solid #a9a9a9;"></div>
<div style="left:555px;top:129px;width:1px;height:134px;background:#a9a9a9;"></div>
<div style="left:624px;top:129px;width:1px;height:134px;background:#a9a9a9;"></div>
<div style="left:664px;top:129px;width:1px;height:134px;background:#a9a9a9;"></div>
<div style="left:461px;top:148px;width:466px;height:1px;background:#a9a9a9;"></div>
<div style="left:461px;top:167px;width:466px;height:1px;background:#a9a9a9;"></div>
<div style="left:461px;top:186px;width:466px;height:1px;background:#a9a9a9;"></div>
<div style="left:461px;top:205px;width:466px;height:1px;background:#a9a9a9;"></div>
<div style="left:461px;top:224px;width:466px;height:1px;background:#a9a9a9;"></div>
<div style="left:461px;top:243px;width:466px;height:1px;background:#a9a9a9;"></div>
<div style="left:461px;top:262px;width:466px;height:1px;background:#a9a9a9;"></div>
<div class="t" style="left:465px;top:130.5px;font-size:12.1px;">Tip odnosa</div>
<div class="t" style="left:559px;top:130.5px;font-size:12.1px;">Račun</div>
<div class="t" style="left:628px;top:130.5px;font-size:12.1px;">Izbor</div>
<div class="t" style="left:668px;top:130.5px;font-size:12.1px;">Naziv računa</div>
<div class="t cap" style="left:464px;top:149.5px;font-size:10.8px;">OBAVEZE</div>
<div class="t" style="left:559px;top:149.5px;font-size:10.8px;">1500</div>
<svg style="position:absolute;left:636px;top:150px;" width="16" height="16" viewBox="0 0 16 16"><rect x="0.5" y="0.5" width="15" height="15" rx="3" fill="#e9e9e9" stroke="#d8d8d8"/></svg>
<div style="left:665px;top:149.5px;width:260px;height:16px;overflow:hidden;"><div class="t cap" style="left:2px;top:0;font-size:10.8px;">PLAĆENI AVANSI ZA MATERIJAL, REZERVNE DELOVE I INVENTAR</div></div>
<div class="t cap" style="left:464px;top:168.5px;font-size:10.8px;">POTRAŽIVANJA</div>
<div class="t" style="left:559px;top:168.5px;font-size:10.8px;">2040</div>
<svg style="position:absolute;left:636px;top:168px;" width="16" height="16" viewBox="0 0 16 16"><rect x="0.5" y="0.5" width="15" height="15" rx="3" fill="#2b579a"/><path d="M3.8 8.2L6.8 11.2L12.3 4.8" fill="none" stroke="#fff" stroke-width="1.3"/></svg>
<div style="left:665px;top:168.5px;width:260px;height:16px;overflow:hidden;"><div class="t cap" style="left:2px;top:0;font-size:10.8px;">KUPCI U ZEMLJI ZA PROIZVODE</div></div>
<div class="t cap" style="left:464px;top:187.5px;font-size:10.8px;">POTRAŽIVANJA</div>
<div class="t" style="left:559px;top:187.5px;font-size:10.8px;">2050</div>
<svg style="position:absolute;left:636px;top:188px;" width="16" height="16" viewBox="0 0 16 16"><rect x="0.5" y="0.5" width="15" height="15" rx="3" fill="#e9e9e9" stroke="#d8d8d8"/></svg>
<div style="left:665px;top:187.5px;width:260px;height:16px;overflow:hidden;"><div class="t cap" style="left:2px;top:0;font-size:10.8px;">KUPCI U INOSTRANSTVU ZA PROIZVODE</div></div>
<div class="t cap" style="left:464px;top:206.5px;font-size:10.8px;">POTRAŽIVANJA</div>
<div class="t" style="left:559px;top:206.5px;font-size:10.8px;">4300</div>
<svg style="position:absolute;left:636px;top:206px;" width="16" height="16" viewBox="0 0 16 16"><rect x="0.5" y="0.5" width="15" height="15" rx="3" fill="#e9e9e9" stroke="#d8d8d8"/></svg>
<div style="left:665px;top:206.5px;width:260px;height:16px;overflow:hidden;"><div class="t cap" style="left:2px;top:0;font-size:10.8px;">PRIMLJENI AVANSI ZA PROIZVODE I USLUGE U DINARIMA</div></div>
<div class="t cap" style="left:464px;top:225.5px;font-size:10.8px;">OBAVEZE</div>
<div class="t" style="left:559px;top:225.5px;font-size:10.8px;">4350</div>
<svg style="position:absolute;left:636px;top:226px;" width="16" height="16" viewBox="0 0 16 16"><rect x="0.5" y="0.5" width="15" height="15" rx="3" fill="#e9e9e9" stroke="#d8d8d8"/></svg>
<div style="left:665px;top:225.5px;width:260px;height:16px;overflow:hidden;"><div class="t cap" style="left:2px;top:0;font-size:10.8px;">DOBAVLJAČI U ZEMLJI ZA OBRTNA SREDSTVA</div></div>
<div class="t cap" style="left:464px;top:244.5px;font-size:10.8px;">OBAVEZE</div>
<div class="t" style="left:559px;top:244.5px;font-size:10.8px;">4360</div>
<svg style="position:absolute;left:636px;top:244px;" width="16" height="16" viewBox="0 0 16 16"><rect x="0.5" y="0.5" width="15" height="15" rx="3" fill="#e9e9e9" stroke="#d8d8d8"/></svg>
<div style="left:665px;top:244.5px;width:260px;height:16px;overflow:hidden;"><div class="t cap" style="left:2px;top:0;font-size:10.8px;">DOBAVLJAČI U INOSTRANSTVU ZA OBRTNA SREDSTVA</div></div>
<svg style="position:absolute;left:466px;top:329px;" width="13" height="10" viewBox="0 0 13 10"><path d="M1 0.5v9" stroke="#6e6e6e" stroke-width="1.1"/><path d="M7 0.5L3 5L7 9.5M11.5 0.5L7.5 5L11.5 9.5" fill="none" stroke="#6e6e6e" stroke-width="1.1"/></svg>
<svg style="position:absolute;left:493px;top:329px;" width="10" height="10" viewBox="0 0 10 10"><path d="M4.5 0.5L0.8 5L4.5 9.5M9 0.5L5.3 5L9 9.5" fill="none" stroke="#6e6e6e" stroke-width="1.1"/></svg>
<svg style="position:absolute;left:519px;top:329px;" width="6" height="10" viewBox="0 0 6 10"><path d="M5 0.5L1 5L5 9.5" fill="none" stroke="#6e6e6e" stroke-width="1.1"/></svg>
<div class="t" style="left:541px;top:326px;font-size:12.6px;color:#1e1e1e;">6 od 6</div>
<svg style="position:absolute;left:593px;top:329px;" width="6" height="10" viewBox="0 0 6 10"><path d="M1 0.5L5 5L1 9.5" fill="none" stroke="#6e6e6e" stroke-width="1.1"/></svg>
<svg style="position:absolute;left:614px;top:329px;" width="10" height="10" viewBox="0 0 10 10"><path d="M1 0.5L4.7 5L1 9.5M5.5 0.5L9.2 5L5.5 9.5" fill="none" stroke="#6e6e6e" stroke-width="1.1"/></svg>
<svg style="position:absolute;left:638px;top:329px;" width="13" height="10" viewBox="0 0 13 10"><path d="M1.5 0.5L5.5 5L1.5 9.5M6 0.5L10 5L6 9.5" fill="none" stroke="#6e6e6e" stroke-width="1.1"/><path d="M12 0.5v9" stroke="#6e6e6e" stroke-width="1.1"/></svg>
<svg style="position:absolute;left:663px;top:329px;" width="10" height="10" viewBox="0 0 10 10"><path d="M5 0.5v9M0.5 5h9" stroke="#333" stroke-width="1.8"/></svg>
<svg style="position:absolute;left:686px;top:329px;" width="10" height="10" viewBox="0 0 10 10"><path d="M0.5 5h9" stroke="#555" stroke-width="1.6"/></svg>
<svg style="position:absolute;left:710px;top:328px;" width="12" height="12" viewBox="0 0 12 12"><path d="M1.5 10.5L2.2 7.8L8.8 1.2a1 1 0 0 1 1.4 0l0.6 0.6a1 1 0 0 1 0 1.4L4.2 9.8z" fill="none" stroke="#444" stroke-width="1.1" stroke-linejoin="round"/><path d="M7.6 2.4L9.6 4.4" stroke="#444" stroke-width="1"/></svg>
<svg style="position:absolute;left:734px;top:329px;" width="12" height="10" viewBox="0 0 12 10"><path d="M1 5.5L4.2 8.7L11 1.5" fill="none" stroke="#aaa" stroke-width="1.2"/></svg>
<svg style="position:absolute;left:759px;top:329px;" width="10" height="10" viewBox="0 0 10 10"><path d="M1 1L9 9M9 1L1 9" stroke="#999" stroke-width="1.1"/></svg>
<svg style="position:absolute;left:782px;top:329px;" width="12" height="10" viewBox="0 0 12 10"><path d="M11 3.5H4.5a3.2 3.2 0 0 0 0 6.4H6" fill="none" stroke="#333" stroke-width="1.3"/><path d="M8.5 0.8L11.2 3.5L8.5 6.2" fill="none" stroke="#333" stroke-width="1.3"/></svg>
<svg style="position:absolute;left:806px;top:329px;" width="10" height="10" viewBox="0 0 10 10"><path d="M5 0v10M0.7 2.5l8.6 5M0.7 7.5l8.6-5" stroke="#222" stroke-width="1.4"/></svg>
<svg style="position:absolute;left:830px;top:328px;" width="12" height="12" viewBox="0 0 12 12"><path d="M7 2.5v9M3.2 4.8l7.6 4.4M3.2 9.2l7.6-4.4" stroke="#555" stroke-width="1.2"/><path d="M0.5 0v4.5M0.5 0l3 3" stroke="#555" stroke-width="0.9"/></svg>
<svg style="position:absolute;left:853px;top:328px;" width="14" height="13" viewBox="0 0 14 13"><path d="M0.8 0.8h12.4L8.3 6.5v5.7l-2.6-1.5V6.5z" fill="none" stroke="#333" stroke-width="1.2" stroke-linejoin="round"/></svg>
<div style="left:883px;top:325px;width:67px;height:19px;background:#e1e1e1;"></div>
<div style="left:464px;top:347px;width:98px;height:24px;background:#ebebeb;border-radius:4px;box-shadow:0 1px 1px #c9c9c9;"></div>
<div class="t" style="left:464.0px;top:351.0px;width:98px;text-align:center;font-size:12.3px;">Obaveze</div>
<div style="left:567px;top:347px;width:98px;height:24px;background:#ebebeb;border-radius:4px;box-shadow:0 1px 1px #c9c9c9;"></div>
<div class="t" style="left:567.0px;top:351.0px;width:98px;text-align:center;font-size:12.3px;">Potraživanja</div>
<div style="left:666px;top:348px;width:1px;height:23px;background:#d0d0d0;"></div>
<div style="left:796px;top:348px;width:1px;height:23px;background:#d0d0d0;"></div>
<div style="left:949px;top:348px;width:1px;height:23px;background:#d0d0d0;"></div>
<div style="left:957px;top:126px;width:751px;height:53px;background:#e6e6e6;border:1px solid #d4d4d4;border-radius:4px;"></div>
<div style="left:958px;top:127px;width:749px;height:20px;background:#e9e9e9;border-radius:3px 3px 0 0;"></div>
<div style="left:958px;top:147px;width:749px;height:1px;background:#d4d4d4;"></div>
<div class="t" style="left:968px;top:129px;font-size:12.2px;">Konto prihoda koristite (+) za izbor</div>
<div style="left:960px;top:150px;width:60px;height:24px;background:#ebebeb;border-radius:4px;box-shadow:0 1px 1px #c9c9c9;"></div>
<div class="t" style="left:960.0px;top:154.0px;width:60px;text-align:center;font-size:12.3px;">6623</div>
<div style="left:1021px;top:153px;width:681px;height:19px;background:#efefef;"></div>
<div class="t" style="left:1023px;top:154.5px;font-size:11.6px;">PRIHODI OD UGOVORENIH I ZATEZNIH KAMATA PO POTRAŽIVANJIMA IZ DUŽNIČKO-POVERILAČKIH ODNOSA</div>
<div style="left:957px;top:180px;width:751px;height:53px;background:#e6e6e6;border:1px solid #d4d4d4;border-radius:4px;"></div>
<div style="left:958px;top:181px;width:749px;height:20px;background:#e9e9e9;border-radius:3px 3px 0 0;"></div>
<div style="left:958px;top:201px;width:749px;height:1px;background:#d4d4d4;"></div>
<div class="t" style="left:968px;top:183px;font-size:12.2px;">Konto rashoda koristite (+) za izbor</div>
<div style="left:960px;top:204px;width:60px;height:24px;background:#ebebeb;border-radius:4px;box-shadow:0 1px 1px #c9c9c9;"></div>
<div class="t" style="left:960.0px;top:208.0px;width:60px;text-align:center;font-size:12.3px;">5624</div>
<div style="left:1021px;top:206px;width:681px;height:19px;background:#efefef;"></div>
<div class="t" style="left:1023px;top:208px;font-size:11.6px;">RASHODI UGOVORENIH I ZATEZNIH KAMATA PO OBAVEZAMA IZ OSTALIH DUŽNIČKO - POVERILAČKIH ODNOSA</div>
<div style="left:957px;top:237px;width:751px;height:140px;background:#e6e6e6;border:1px solid #d4d4d4;border-radius:4px;"></div>
<div style="left:958px;top:238px;width:749px;height:19px;background:#e9e9e9;border-radius:3px 3px 0 0;"></div>
<div style="left:958px;top:257px;width:749px;height:1px;background:#d4d4d4;"></div>
<div class="t" style="left:968px;top:239.5px;font-size:12.2px;">Napomena za štampu</div>
<div style="left:951px;top:126px;width:6px;height:251px;background:#dcdcdc;"></div>
<div style="left:960px;top:260px;width:745px;height:113px;background:#e6e6e6;border-radius:3px;box-shadow:0 1px 1px #9a9a9a;"></div>
<div style="left:1686px;top:262px;width:17px;height:109px;background:#ebebeb;"></div>
<div style="left:234px;top:379px;width:101px;height:26px;border:1px solid #d6d6d6;border-bottom:none;border-radius:4px 4px 0 0;background:#e6e6e6;"></div>
<div style="left:237px;top:380px;width:95px;height:3px;background:#2b579a;"></div>
<div class="t" style="left:240px;top:384.5px;font-size:12.1px;">Poslovni partneri</div>
<div style="left:336px;top:380px;width:146px;height:24px;border:1px solid #d2d2d2;border-bottom:none;border-radius:4px 4px 0 0;background:#e4e4e4;"></div>
<div class="t" style="left:342px;top:384.5px;font-size:12.1px;">Po definisanom prometu</div>
<div style="left:483px;top:380px;width:224px;height:24px;border:1px solid #d2d2d2;border-bottom:none;border-radius:4px 4px 0 0;background:#e4e4e4;"></div>
<div class="t" style="left:489px;top:384.5px;font-size:12.1px;">Rekapitulacija po definisanom prometu</div>
<div style="left:233px;top:403px;width:1477px;height:601px;background:#e6e6e6;"></div>
<div style="left:335px;top:402px;width:1375px;height:2px;background:#d2d2d2;"></div>
<div style="left:233px;top:402px;width:2px;height:2px;background:#d2d2d2;"></div>
<div style="left:235px;top:404px;width:1455px;height:547px;background:#e8e8e8;"></div>
<div style="left:235px;top:425px;width:1455px;height:18px;background:#e2e2e2;"></div>
<div class="t" style="left:237px;top:406.5px;font-size:11.9px;">Šifra</div>
<div class="t" style="left:281px;top:406.5px;font-size:11.9px;">Naziv partnera</div>
<div class="t" style="left:530px;top:406.5px;font-size:11.9px;">Tip partnera</div>
<div class="t" style="left:633px;top:406.5px;font-size:11.9px;">PDV</div>
<div class="t" style="left:670px;top:406.5px;font-size:11.9px;">PIB / JMBG</div>
<div class="t" style="left:747px;top:406.5px;font-size:11.9px;">Pošt.br.</div>
<div class="t" style="left:796px;top:406.5px;font-size:11.9px;">Mesto</div>
<div class="t" style="left:899px;top:406.5px;font-size:11.9px;">Adresa</div>
<div class="t" style="left:1095px;top:406.5px;font-size:11.9px;">Tekući računi</div>
<div class="t" style="left:1271px;top:406.5px;font-size:11.9px;">Mat.broj / ...</div>
<div class="t" style="left:1347px;top:406.5px;font-size:11.9px;">% Rabat</div>
<div class="t" style="left:1408px;top:406.5px;font-size:11.9px;">Kred.limit</div>
<div class="t" style="left:1484px;top:406.5px;font-size:11.9px;">Valutna ...</div>
<div class="t" style="left:1551px;top:406.5px;font-size:11.9px;">Tip kursn...</div>
<div class="t" style="left:1618px;top:406.5px;font-size:11.9px;">Blo...</div>
<div class="t" style="left:1654px;top:406.5px;font-size:11.9px;">Boj...</div>
<div style="left:279px;top:405px;width:1px;height:546px;background:#a9a9a9;"></div>
<div style="left:528px;top:405px;width:1px;height:546px;background:#a9a9a9;"></div>
<div style="left:631px;top:405px;width:1px;height:546px;background:#a9a9a9;"></div>
<div style="left:668px;top:405px;width:1px;height:546px;background:#a9a9a9;"></div>
<div style="left:745px;top:405px;width:1px;height:546px;background:#a9a9a9;"></div>
<div style="left:794px;top:405px;width:1px;height:546px;background:#a9a9a9;"></div>
<div style="left:897px;top:405px;width:1px;height:546px;background:#a9a9a9;"></div>
<div style="left:1093px;top:405px;width:1px;height:546px;background:#a9a9a9;"></div>
<div style="left:1269px;top:405px;width:1px;height:546px;background:#a9a9a9;"></div>
<div style="left:1345px;top:405px;width:1px;height:546px;background:#a9a9a9;"></div>
<div style="left:1406px;top:405px;width:1px;height:546px;background:#a9a9a9;"></div>
<div style="left:1482px;top:405px;width:1px;height:546px;background:#a9a9a9;"></div>
<div style="left:1549px;top:405px;width:1px;height:546px;background:#a9a9a9;"></div>
<div style="left:1616px;top:405px;width:1px;height:546px;background:#a9a9a9;"></div>
<div style="left:1652px;top:405px;width:1px;height:546px;background:#a9a9a9;"></div>
<div style="left:235px;top:404px;width:1455px;height:547px;overflow:hidden;">
<div style="left:0;top:20px;width:1455px;height:1px;background:#a9a9a9;"></div>
<div style="left:0;top:39px;width:1455px;height:1px;background:#a9a9a9;"></div>
<div style="left:0;top:58px;width:1455px;height:1px;background:#a9a9a9;"></div>
<div style="left:0;top:77px;width:1455px;height:1px;background:#a9a9a9;"></div>
<div style="left:0;top:96px;width:1455px;height:1px;background:#a9a9a9;"></div>
<div style="left:0;top:115px;width:1455px;height:1px;background:#a9a9a9;"></div>
<div style="left:0;top:134px;width:1455px;height:1px;background:#a9a9a9;"></div>
<div style="left:0;top:153px;width:1455px;height:1px;background:#a9a9a9;"></div>
<div style="left:0;top:172px;width:1455px;height:1px;background:#a9a9a9;"></div>
<div style="left:0;top:191px;width:1455px;height:1px;background:#a9a9a9;"></div>
<div style="left:0;top:210px;width:1455px;height:1px;background:#a9a9a9;"></div>
<div style="left:0;top:229px;width:1455px;height:1px;background:#a9a9a9;"></div>
<div style="left:0;top:248px;width:1455px;height:1px;background:#a9a9a9;"></div>
<div style="left:0;top:267px;width:1455px;height:1px;background:#a9a9a9;"></div>
<div style="left:0;top:286px;width:1455px;height:1px;background:#a9a9a9;"></div>
<div style="left:0;top:305px;width:1455px;height:1px;background:#a9a9a9;"></div>
<div style="left:0;top:324px;width:1455px;height:1px;background:#a9a9a9;"></div>
<div style="left:0;top:343px;width:1455px;height:1px;background:#a9a9a9;"></div>
<div style="left:0;top:362px;width:1455px;height:1px;background:#a9a9a9;"></div>
<div style="left:0;top:381px;width:1455px;height:1px;background:#a9a9a9;"></div>
<div style="left:0;top:400px;width:1455px;height:1px;background:#a9a9a9;"></div>
<div style="left:0;top:419px;width:1455px;height:1px;background:#a9a9a9;"></div>
<div style="left:0;top:438px;width:1455px;height:1px;background:#a9a9a9;"></div>
<div style="left:0;top:457px;width:1455px;height:1px;background:#a9a9a9;"></div>
<div style="left:0;top:476px;width:1455px;height:1px;background:#a9a9a9;"></div>
<div style="left:0;top:495px;width:1455px;height:1px;background:#a9a9a9;"></div>
<div style="left:0;top:514px;width:1455px;height:1px;background:#a9a9a9;"></div>
<div style="left:0;top:533px;width:1455px;height:1px;background:#a9a9a9;"></div>
<div style="left:0;top:552px;width:1455px;height:1px;background:#a9a9a9;"></div>
<div class="t" style="left:-159px;width:200px;text-align:right;top:22.0px;font-size:11px;">00001</div>
<div class="t cap" style="left:47px;top:22.0px;font-size:11px;">TEST DOO 1</div>
<div class="t cap" style="left:296px;top:22.0px;font-size:11px;">PRAVNO LICE</div>
<svg style="position:absolute;left:407px;top:22px" width="16" height="16"><rect x="0.5" y="0.5" width="15" height="15" rx="3" fill="#e9e9e9" stroke="#d8d8d8"/></svg>
<div class="t" style="left:437px;top:22.0px;font-size:11px;">111064867</div>
<div class="t" style="left:514px;top:22.0px;font-size:11px;">15000</div>
<div class="t cap" style="left:562px;top:22.0px;font-size:11px;">ŠABAC</div>
<div class="t cap" style="left:665px;top:22.0px;font-size:11px;">KRALJA MILANA 9</div>
<div style="left:861px;top:22.0px;width:171px;height:16px;overflow:hidden;"><div class="t" style="left:0;top:0;font-size:11px;">105-2963433-71,170-50043035000-12</div></div>
<div class="t" style="left:1037px;top:22.0px;font-size:11px;">65165945</div>
<svg style="position:absolute;left:1096px;top:27px" width="10" height="7"><path d="M1 1L5 5L9 1" fill="none" stroke="#333" stroke-width="1.2"/></svg>
<div class="t" style="left:967px;width:200px;text-align:right;top:22.0px;font-size:11px;">15,00</div>
<div class="t" style="left:1044px;width:200px;text-align:right;top:22.0px;font-size:11px;">0,00</div>
<div class="t" style="left:1250px;top:22.0px;font-size:11px;">nema</div>
<div class="t cap" style="left:1317px;top:22.0px;font-size:11px;">NBS</div>
<svg style="position:absolute;left:1391px;top:22px" width="16" height="16"><rect x="0.5" y="0.5" width="15" height="15" rx="3" fill="#e9e9e9" stroke="#d8d8d8"/></svg>
<div style="left:1421px;top:23px;width:31px;height:15px;background:#000;border:1px solid #3a3a3a;"></div>
<div class="t" style="left:-159px;width:200px;text-align:right;top:41.0px;font-size:11px;">00002</div>
<div class="t cap" style="left:47px;top:41.0px;font-size:11px;">TEST DOO 2</div>
<div class="t cap" style="left:296px;top:41.0px;font-size:11px;">PRAVNO LICE</div>
<svg style="position:absolute;left:407px;top:41px" width="16" height="16"><rect x="0.5" y="0.5" width="15" height="15" rx="3" fill="#2b579a"/><path d="M3.8 8.2L6.8 11.2L12.3 4.8" fill="none" stroke="#fff" stroke-width="1.3"/></svg>
<div class="t" style="left:437px;top:41.0px;font-size:11px;">100153163</div>
<div class="t" style="left:514px;top:41.0px;font-size:11px;">11000</div>
<div class="t cap" style="left:562px;top:41.0px;font-size:11px;">BEOGRAD</div>
<div class="t cap" style="left:665px;top:41.0px;font-size:11px;">ŽORŽA KLEMANSOA 39</div>
<div style="left:861px;top:41.0px;width:171px;height:16px;overflow:hidden;"><div class="t" style="left:0;top:0;font-size:11px;">105-2992329-4,160-156874-98,170-1234</div></div>
<div class="t" style="left:1037px;top:41.0px;font-size:11px;">17175122</div>
<svg style="position:absolute;left:1096px;top:46px" width="10" height="7"><path d="M1 1L5 5L9 1" fill="none" stroke="#333" stroke-width="1.2"/></svg>
<div class="t" style="left:967px;width:200px;text-align:right;top:41.0px;font-size:11px;">0,00</div>
<div class="t" style="left:1044px;width:200px;text-align:right;top:41.0px;font-size:11px;">0,00</div>
<div class="t" style="left:1250px;top:41.0px;font-size:11px;">nema</div>
<div class="t cap" style="left:1317px;top:41.0px;font-size:11px;">NBS</div>
<svg style="position:absolute;left:1391px;top:41px" width="16" height="16"><rect x="0.5" y="0.5" width="15" height="15" rx="3" fill="#e9e9e9" stroke="#d8d8d8"/></svg>
<div style="left:1421px;top:42px;width:31px;height:15px;background:#000;border:1px solid #3a3a3a;"></div>
<div class="t" style="left:-159px;width:200px;text-align:right;top:60.0px;font-size:11px;">00003</div>
<div class="t cap" style="left:47px;top:60.0px;font-size:11px;">TEST DOO 3</div>
<div class="t cap" style="left:296px;top:60.0px;font-size:11px;">PRAVNO LICE</div>
<svg style="position:absolute;left:407px;top:60px" width="16" height="16"><rect x="0.5" y="0.5" width="15" height="15" rx="3" fill="#2b579a"/><path d="M3.8 8.2L6.8 11.2L12.3 4.8" fill="none" stroke="#fff" stroke-width="1.3"/></svg>
<div class="t" style="left:437px;top:60.0px;font-size:11px;">108497367</div>
<div class="t" style="left:514px;top:60.0px;font-size:11px;">22310</div>
<div class="t cap" style="left:562px;top:60.0px;font-size:11px;">ŠIMANOVCI</div>
<div class="t cap" style="left:665px;top:60.0px;font-size:11px;">MIHAJLA PUPINA 2</div>
<div style="left:861px;top:60.0px;width:171px;height:16px;overflow:hidden;"><div class="t" style="left:0;top:0;font-size:11px;">170-30020608000-75,170-30020608001</div></div>
<div class="t" style="left:1037px;top:60.0px;font-size:11px;">21011100</div>
<svg style="position:absolute;left:1096px;top:65px" width="10" height="7"><path d="M1 1L5 5L9 1" fill="none" stroke="#333" stroke-width="1.2"/></svg>
<div class="t" style="left:967px;width:200px;text-align:right;top:60.0px;font-size:11px;">0,00</div>
<div class="t" style="left:1044px;width:200px;text-align:right;top:60.0px;font-size:11px;">0,00</div>
<div class="t" style="left:1250px;top:60.0px;font-size:11px;">nema</div>
<div class="t cap" style="left:1317px;top:60.0px;font-size:11px;">NBS</div>
<svg style="position:absolute;left:1391px;top:60px" width="16" height="16"><rect x="0.5" y="0.5" width="15" height="15" rx="3" fill="#e9e9e9" stroke="#d8d8d8"/></svg>
<div style="left:1421px;top:61px;width:31px;height:15px;background:#000;border:1px solid #3a3a3a;"></div>
<div class="t" style="left:-159px;width:200px;text-align:right;top:79.0px;font-size:11px;">00004</div>
<div class="t cap" style="left:47px;top:79.0px;font-size:11px;">TEST DOO</div>
<div class="t cap" style="left:296px;top:79.0px;font-size:11px;">PRAVNO LICE</div>
<svg style="position:absolute;left:407px;top:79px" width="16" height="16"><rect x="0.5" y="0.5" width="15" height="15" rx="3" fill="#2b579a"/><path d="M3.8 8.2L6.8 11.2L12.3 4.8" fill="none" stroke="#fff" stroke-width="1.3"/></svg>
<div class="t" style="left:437px;top:79.0px;font-size:11px;">106369842</div>
<div class="t" style="left:514px;top:79.0px;font-size:11px;">11210</div>
<div class="t cap" style="left:562px;top:79.0px;font-size:11px;">KRNJAČA</div>
<div class="t cap" style="left:665px;top:79.0px;font-size:11px;">PANCEVACKI PUT 69</div>
<div style="left:861px;top:79.0px;width:171px;height:16px;overflow:hidden;"><div class="t" style="left:0;top:0;font-size:11px;">150-1862179-25,150-25026905-42</div></div>
<div class="t" style="left:1037px;top:79.0px;font-size:11px;">20586583</div>
<svg style="position:absolute;left:1096px;top:84px" width="10" height="7"><path d="M1 1L5 5L9 1" fill="none" stroke="#333" stroke-width="1.2"/></svg>
<div class="t" style="left:967px;width:200px;text-align:right;top:79.0px;font-size:11px;">0,00</div>
<div class="t" style="left:1044px;width:200px;text-align:right;top:79.0px;font-size:11px;">0,00</div>
<div class="t" style="left:1250px;top:79.0px;font-size:11px;">nema</div>
<div class="t cap" style="left:1317px;top:79.0px;font-size:11px;">NBS</div>
<svg style="position:absolute;left:1391px;top:79px" width="16" height="16"><rect x="0.5" y="0.5" width="15" height="15" rx="3" fill="#e9e9e9" stroke="#d8d8d8"/></svg>
<div style="left:1421px;top:80px;width:31px;height:15px;background:#000;border:1px solid #3a3a3a;"></div>
<div class="t" style="left:-159px;width:200px;text-align:right;top:98.0px;font-size:11px;">00005</div>
<div class="t cap" style="left:47px;top:98.0px;font-size:11px;">PARTNER TEST</div>
<div class="t cap" style="left:296px;top:98.0px;font-size:11px;">PRAVNO LICE</div>
<svg style="position:absolute;left:407px;top:98px" width="16" height="16"><rect x="0.5" y="0.5" width="15" height="15" rx="3" fill="#2b579a"/><path d="M3.8 8.2L6.8 11.2L12.3 4.8" fill="none" stroke="#fff" stroke-width="1.3"/></svg>
<div class="t" style="left:437px;top:98.0px;font-size:11px;">111307110</div>
<div class="t" style="left:514px;top:98.0px;font-size:11px;">21000</div>
<div class="t cap" style="left:562px;top:98.0px;font-size:11px;">NOVI SAD</div>
<div class="t cap" style="left:665px;top:98.0px;font-size:11px;">FRUŠKOGORSKA 20</div>
<div style="left:861px;top:98.0px;width:171px;height:16px;overflow:hidden;"><div class="t" style="left:0;top:0;font-size:11px;">105-3158744-18,160-537374-94,160-1</div></div>
<div class="t" style="left:1037px;top:98.0px;font-size:11px;">65322307</div>
<svg style="position:absolute;left:1096px;top:103px" width="10" height="7"><path d="M1 1L5 5L9 1" fill="none" stroke="#333" stroke-width="1.2"/></svg>
<div class="t" style="left:967px;width:200px;text-align:right;top:98.0px;font-size:11px;">0,00</div>
<div class="t" style="left:1044px;width:200px;text-align:right;top:98.0px;font-size:11px;">0,00</div>
<div class="t" style="left:1250px;top:98.0px;font-size:11px;">nema</div>
<div class="t cap" style="left:1317px;top:98.0px;font-size:11px;">NBS</div>
<svg style="position:absolute;left:1391px;top:98px" width="16" height="16"><rect x="0.5" y="0.5" width="15" height="15" rx="3" fill="#e9e9e9" stroke="#d8d8d8"/></svg>
<div style="left:1421px;top:99px;width:31px;height:15px;background:#000;border:1px solid #3a3a3a;"></div>
<div class="t" style="left:-159px;width:200px;text-align:right;top:117.0px;font-size:11px;">00006</div>
<div class="t cap" style="left:47px;top:117.0px;font-size:11px;">TEST DOO</div>
<div class="t cap" style="left:296px;top:117.0px;font-size:11px;">PRAVNO LICE</div>
<svg style="position:absolute;left:407px;top:117px" width="16" height="16"><rect x="0.5" y="0.5" width="15" height="15" rx="3" fill="#2b579a"/><path d="M3.8 8.2L6.8 11.2L12.3 4.8" fill="none" stroke="#fff" stroke-width="1.3"/></svg>
<div class="t" style="left:437px;top:117.0px;font-size:11px;">100825837</div>
<div class="t" style="left:514px;top:117.0px;font-size:11px;">11080</div>
<div class="t cap" style="left:562px;top:117.0px;font-size:11px;">ZEMUN</div>
<div class="t cap" style="left:665px;top:117.0px;font-size:11px;">CARA DUSANA 120</div>
<div style="left:861px;top:117.0px;width:171px;height:16px;overflow:hidden;"><div class="t" style="left:0;top:0;font-size:11px;">150-1853886-72,160-471669-8,205-12</div></div>
<div class="t" style="left:1037px;top:117.0px;font-size:11px;">17319680</div>
<svg style="position:absolute;left:1096px;top:122px" width="10" height="7"><path d="M1 1L5 5L9 1" fill="none" stroke="#333" stroke-width="1.2"/></svg>
<div class="t" style="left:967px;width:200px;text-align:right;top:117.0px;font-size:11px;">0,00</div>
<div class="t" style="left:1044px;width:200px;text-align:right;top:117.0px;font-size:11px;">0,00</div>
<div class="t" style="left:1250px;top:117.0px;font-size:11px;">nema</div>
<div class="t cap" style="left:1317px;top:117.0px;font-size:11px;">NBS</div>
<svg style="position:absolute;left:1391px;top:117px" width="16" height="16"><rect x="0.5" y="0.5" width="15" height="15" rx="3" fill="#e9e9e9" stroke="#d8d8d8"/></svg>
<div style="left:1421px;top:118px;width:31px;height:15px;background:#000;border:1px solid #3a3a3a;"></div>
<div class="t" style="left:-159px;width:200px;text-align:right;top:136.0px;font-size:11px;color:#1f9aa6;">00007</div>
<div class="t cap" style="left:47px;top:136.0px;font-size:11px;color:#1f9aa6;">PARTNER STRANA FIRMA</div>
<div class="t cap" style="left:296px;top:136.0px;font-size:11px;color:#1f9aa6;">STRANA FIRMA</div>
<svg style="position:absolute;left:407px;top:136px" width="16" height="16"><rect x="0.5" y="0.5" width="15" height="15" rx="3" fill="#e9e9e9" stroke="#d8d8d8"/></svg>
<div class="t" style="left:437px;top:136.0px;font-size:11px;color:#1f9aa6;"></div>
<div class="t" style="left:514px;top:136.0px;font-size:11px;color:#1f9aa6;">1423</div>
<div class="t cap" style="left:562px;top:136.0px;font-size:11px;color:#1f9aa6;">WIEN</div>
<div class="t cap" style="left:665px;top:136.0px;font-size:11px;color:#1f9aa6;">MARIAHILFER STRAßE 1</div>
<div style="left:861px;top:136.0px;width:171px;height:16px;overflow:hidden;"><div class="t" style="left:0;top:0;font-size:11px;color:#1f9aa6;"></div></div>
<div class="t" style="left:967px;width:200px;text-align:right;top:136.0px;font-size:11px;color:#1f9aa6;">0,00</div>
<div class="t" style="left:1044px;width:200px;text-align:right;top:136.0px;font-size:11px;color:#1f9aa6;">0,00</div>
<div class="t" style="left:1250px;top:136.0px;font-size:11px;color:#1f9aa6;">nema</div>
<div class="t cap" style="left:1317px;top:136.0px;font-size:11px;color:#1f9aa6;">NBS</div>
<svg style="position:absolute;left:1391px;top:136px" width="16" height="16"><rect x="0.5" y="0.5" width="15" height="15" rx="3" fill="#e9e9e9" stroke="#d8d8d8"/></svg>
<div style="left:1421px;top:137px;width:31px;height:15px;background:#0b7f80;border:1px solid #3a3a3a;"></div>
<div class="t" style="left:-159px;width:200px;text-align:right;top:155.0px;font-size:11px;">00008</div>
<div class="t cap" style="left:47px;top:155.0px;font-size:11px;">TEST DOO</div>
<div class="t cap" style="left:296px;top:155.0px;font-size:11px;">PRAVNO LICE</div>
<svg style="position:absolute;left:407px;top:155px" width="16" height="16"><rect x="0.5" y="0.5" width="15" height="15" rx="3" fill="#2b579a"/><path d="M3.8 8.2L6.8 11.2L12.3 4.8" fill="none" stroke="#fff" stroke-width="1.3"/></svg>
<div class="t" style="left:437px;top:155.0px;font-size:11px;">101696447</div>
<div class="t" style="left:514px;top:155.0px;font-size:11px;">21000</div>
<div class="t cap" style="left:562px;top:155.0px;font-size:11px;">NOVI SAD</div>
<div class="t cap" style="left:665px;top:155.0px;font-size:11px;">DIMITRIJA AVRAMOVIĆA 19</div>
<div style="left:861px;top:155.0px;width:171px;height:16px;overflow:hidden;"><div class="t" style="left:0;top:0;font-size:11px;">105-31077-15,160-179452-70</div></div>
<div class="t" style="left:1037px;top:155.0px;font-size:11px;">08659257</div>
<svg style="position:absolute;left:1096px;top:160px" width="10" height="7"><path d="M1 1L5 5L9 1" fill="none" stroke="#333" stroke-width="1.2"/></svg>
<div class="t" style="left:967px;width:200px;text-align:right;top:155.0px;font-size:11px;">0,00</div>
<div class="t" style="left:1044px;width:200px;text-align:right;top:155.0px;font-size:11px;">0,00</div>
<div class="t" style="left:1250px;top:155.0px;font-size:11px;">nema</div>
<div class="t cap" style="left:1317px;top:155.0px;font-size:11px;">NBS</div>
<svg style="position:absolute;left:1391px;top:155px" width="16" height="16"><rect x="0.5" y="0.5" width="15" height="15" rx="3" fill="#e9e9e9" stroke="#d8d8d8"/></svg>
<div style="left:1421px;top:156px;width:31px;height:15px;background:#000;border:1px solid #3a3a3a;"></div>
<div class="t" style="left:-159px;width:200px;text-align:right;top:174.0px;font-size:11px;">00009</div>
<div class="t cap" style="left:47px;top:174.0px;font-size:11px;">TEST DOO</div>
<div class="t cap" style="left:296px;top:174.0px;font-size:11px;">PRAVNO LICE</div>
<svg style="position:absolute;left:407px;top:174px" width="16" height="16"><rect x="0.5" y="0.5" width="15" height="15" rx="3" fill="#2b579a"/><path d="M3.8 8.2L6.8 11.2L12.3 4.8" fill="none" stroke="#fff" stroke-width="1.3"/></svg>
<div class="t" style="left:437px;top:174.0px;font-size:11px;">112772647</div>
<div class="t" style="left:514px;top:174.0px;font-size:11px;">21000</div>
<div class="t cap" style="left:562px;top:174.0px;font-size:11px;">NOVI SAD</div>
<div class="t cap" style="left:665px;top:174.0px;font-size:11px;">UROSA PREDICA &nbsp;&nbsp; 16</div>
<div style="left:861px;top:174.0px;width:171px;height:16px;overflow:hidden;"><div class="t" style="left:0;top:0;font-size:11px;">340-11030645-30</div></div>
<div class="t" style="left:1037px;top:174.0px;font-size:11px;">21736171</div>
<svg style="position:absolute;left:1096px;top:179px" width="10" height="7"><path d="M1 1L5 5L9 1" fill="none" stroke="#333" stroke-width="1.2"/></svg>
<div class="t" style="left:967px;width:200px;text-align:right;top:174.0px;font-size:11px;">0,00</div>
<div class="t" style="left:1044px;width:200px;text-align:right;top:174.0px;font-size:11px;">0,00</div>
<div class="t" style="left:1250px;top:174.0px;font-size:11px;">nema</div>
<div class="t cap" style="left:1317px;top:174.0px;font-size:11px;">NBS</div>
<svg style="position:absolute;left:1391px;top:174px" width="16" height="16"><rect x="0.5" y="0.5" width="15" height="15" rx="3" fill="#e9e9e9" stroke="#d8d8d8"/></svg>
<div style="left:1421px;top:175px;width:31px;height:15px;background:#000;border:1px solid #3a3a3a;"></div>
<div class="t" style="left:-159px;width:200px;text-align:right;top:193.0px;font-size:11px;">00010</div>
<div class="t cap" style="left:47px;top:193.0px;font-size:11px;">TEST DOO</div>
<div class="t cap" style="left:296px;top:193.0px;font-size:11px;">PRAVNO LICE</div>
<svg style="position:absolute;left:407px;top:193px" width="16" height="16"><rect x="0.5" y="0.5" width="15" height="15" rx="3" fill="#2b579a"/><path d="M3.8 8.2L6.8 11.2L12.3 4.8" fill="none" stroke="#fff" stroke-width="1.3"/></svg>
<div class="t" style="left:437px;top:193.0px;font-size:11px;">101645012</div>
<div class="t" style="left:514px;top:193.0px;font-size:11px;">21000</div>
<div class="t cap" style="left:562px;top:193.0px;font-size:11px;">NOVI SAD</div>
<div class="t cap" style="left:665px;top:193.0px;font-size:11px;">RADE KONČARA 1</div>
<div style="left:861px;top:193.0px;width:171px;height:16px;overflow:hidden;"><div class="t" style="left:0;top:0;font-size:11px;">160-519390-17,220-77596-7,265-2222</div></div>
<div class="t" style="left:1037px;top:193.0px;font-size:11px;">08616850</div>
<svg style="position:absolute;left:1096px;top:198px" width="10" height="7"><path d="M1 1L5 5L9 1" fill="none" stroke="#333" stroke-width="1.2"/></svg>
<div class="t" style="left:967px;width:200px;text-align:right;top:193.0px;font-size:11px;">0,00</div>
<div class="t" style="left:1044px;width:200px;text-align:right;top:193.0px;font-size:11px;">0,00</div>
<div class="t" style="left:1250px;top:193.0px;font-size:11px;">nema</div>
<div class="t cap" style="left:1317px;top:193.0px;font-size:11px;">NBS</div>
<svg style="position:absolute;left:1391px;top:193px" width="16" height="16"><rect x="0.5" y="0.5" width="15" height="15" rx="3" fill="#e9e9e9" stroke="#d8d8d8"/></svg>
<div style="left:1421px;top:194px;width:31px;height:15px;background:#000;border:1px solid #3a3a3a;"></div>
<div class="t" style="left:-159px;width:200px;text-align:right;top:212.0px;font-size:11px;">00011</div>
<div class="t cap" style="left:47px;top:212.0px;font-size:11px;">TEST DOO</div>
<div class="t cap" style="left:296px;top:212.0px;font-size:11px;">PRAVNO LICE</div>
<svg style="position:absolute;left:407px;top:212px" width="16" height="16"><rect x="0.5" y="0.5" width="15" height="15" rx="3" fill="#2b579a"/><path d="M3.8 8.2L6.8 11.2L12.3 4.8" fill="none" stroke="#fff" stroke-width="1.3"/></svg>
<div class="t" style="left:437px;top:212.0px;font-size:11px;">111576049</div>
<div class="t" style="left:514px;top:212.0px;font-size:11px;">21000</div>
<div class="t cap" style="left:562px;top:212.0px;font-size:11px;">NOVI SAD</div>
<div class="t cap" style="left:665px;top:212.0px;font-size:11px;">PAVLA PAPA 27/A</div>
<div style="left:861px;top:212.0px;width:171px;height:16px;overflow:hidden;"><div class="t" style="left:0;top:0;font-size:11px;">340-11426895-15</div></div>
<div class="t" style="left:1037px;top:212.0px;font-size:11px;">65511746</div>
<svg style="position:absolute;left:1096px;top:217px" width="10" height="7"><path d="M1 1L5 5L9 1" fill="none" stroke="#333" stroke-width="1.2"/></svg>
<div class="t" style="left:967px;width:200px;text-align:right;top:212.0px;font-size:11px;">0,00</div>
<div class="t" style="left:1044px;width:200px;text-align:right;top:212.0px;font-size:11px;">0,00</div>
<div class="t" style="left:1250px;top:212.0px;font-size:11px;">nema</div>
<div class="t cap" style="left:1317px;top:212.0px;font-size:11px;">NBS</div>
<svg style="position:absolute;left:1391px;top:212px" width="16" height="16"><rect x="0.5" y="0.5" width="15" height="15" rx="3" fill="#e9e9e9" stroke="#d8d8d8"/></svg>
<div style="left:1421px;top:213px;width:31px;height:15px;background:#000;border:1px solid #3a3a3a;"></div>
<div class="t" style="left:-159px;width:200px;text-align:right;top:231.0px;font-size:11px;">00012</div>
<div class="t cap" style="left:47px;top:231.0px;font-size:11px;">TEST DOO</div>
<div class="t cap" style="left:296px;top:231.0px;font-size:11px;">PRAVNO LICE</div>
<svg style="position:absolute;left:407px;top:231px" width="16" height="16"><rect x="0.5" y="0.5" width="15" height="15" rx="3" fill="#2b579a"/><path d="M3.8 8.2L6.8 11.2L12.3 4.8" fill="none" stroke="#fff" stroke-width="1.3"/></svg>
<div class="t" style="left:437px;top:231.0px;font-size:11px;">113304183</div>
<div class="t" style="left:514px;top:231.0px;font-size:11px;">21000</div>
<div class="t cap" style="left:562px;top:231.0px;font-size:11px;">NOVI SAD</div>
<div class="t cap" style="left:665px;top:231.0px;font-size:11px;">DANILA KISA &nbsp;&nbsp; 25</div>
<div style="left:861px;top:231.0px;width:171px;height:16px;overflow:hidden;"><div class="t" style="left:0;top:0;font-size:11px;">340-11438605-96</div></div>
<div class="t" style="left:1037px;top:231.0px;font-size:11px;">66725243</div>
<svg style="position:absolute;left:1096px;top:236px" width="10" height="7"><path d="M1 1L5 5L9 1" fill="none" stroke="#333" stroke-width="1.2"/></svg>
<div class="t" style="left:967px;width:200px;text-align:right;top:231.0px;font-size:11px;">0,00</div>
<div class="t" style="left:1044px;width:200px;text-align:right;top:231.0px;font-size:11px;">0,00</div>
<div class="t" style="left:1250px;top:231.0px;font-size:11px;">nema</div>
<div class="t cap" style="left:1317px;top:231.0px;font-size:11px;">NBS</div>
<svg style="position:absolute;left:1391px;top:231px" width="16" height="16"><rect x="0.5" y="0.5" width="15" height="15" rx="3" fill="#e9e9e9" stroke="#d8d8d8"/></svg>
<div style="left:1421px;top:232px;width:31px;height:15px;background:#000;border:1px solid #3a3a3a;"></div>
<div class="t" style="left:-159px;width:200px;text-align:right;top:250.0px;font-size:11px;">00013</div>
<div class="t cap" style="left:47px;top:250.0px;font-size:11px;">TEST DOO</div>
<div class="t cap" style="left:296px;top:250.0px;font-size:11px;">PRAVNO LICE</div>
<svg style="position:absolute;left:407px;top:250px" width="16" height="16"><rect x="0.5" y="0.5" width="15" height="15" rx="3" fill="#2b579a"/><path d="M3.8 8.2L6.8 11.2L12.3 4.8" fill="none" stroke="#fff" stroke-width="1.3"/></svg>
<div class="t" style="left:437px;top:250.0px;font-size:11px;">110317614</div>
<div class="t" style="left:514px;top:250.0px;font-size:11px;">21000</div>
<div class="t cap" style="left:562px;top:250.0px;font-size:11px;">NOVI SAD</div>
<div class="t cap" style="left:665px;top:250.0px;font-size:11px;">LUKIJANA MUŠICKOG 19</div>
<div style="left:861px;top:250.0px;width:171px;height:16px;overflow:hidden;"><div class="t" style="left:0;top:0;font-size:11px;">160-493606-60</div></div>
<div class="t" style="left:1037px;top:250.0px;font-size:11px;">64805975</div>
<svg style="position:absolute;left:1096px;top:255px" width="10" height="7"><path d="M1 1L5 5L9 1" fill="none" stroke="#333" stroke-width="1.2"/></svg>
<div class="t" style="left:967px;width:200px;text-align:right;top:250.0px;font-size:11px;">0,00</div>
<div class="t" style="left:1044px;width:200px;text-align:right;top:250.0px;font-size:11px;">0,00</div>
<div class="t" style="left:1250px;top:250.0px;font-size:11px;">nema</div>
<div class="t cap" style="left:1317px;top:250.0px;font-size:11px;">NBS</div>
<svg style="position:absolute;left:1391px;top:250px" width="16" height="16"><rect x="0.5" y="0.5" width="15" height="15" rx="3" fill="#e9e9e9" stroke="#d8d8d8"/></svg>
<div style="left:1421px;top:251px;width:31px;height:15px;background:#000;border:1px solid #3a3a3a;"></div>
<div class="t" style="left:-159px;width:200px;text-align:right;top:269.0px;font-size:11px;">00014</div>
<div class="t cap" style="left:47px;top:269.0px;font-size:11px;">TEST DOO</div>
<div class="t cap" style="left:296px;top:269.0px;font-size:11px;">PRAVNO LICE</div>
<svg style="position:absolute;left:407px;top:269px" width="16" height="16"><rect x="0.5" y="0.5" width="15" height="15" rx="3" fill="#2b579a"/><path d="M3.8 8.2L6.8 11.2L12.3 4.8" fill="none" stroke="#fff" stroke-width="1.3"/></svg>
<div class="t" style="left:437px;top:269.0px;font-size:11px;">110184826</div>
<div class="t" style="left:514px;top:269.0px;font-size:11px;">21000</div>
<div class="t cap" style="left:562px;top:269.0px;font-size:11px;">NOVI SAD</div>
<div class="t cap" style="left:665px;top:269.0px;font-size:11px;">PAVLA PAPA</div>
<div style="left:861px;top:269.0px;width:171px;height:16px;overflow:hidden;"><div class="t" style="left:0;top:0;font-size:11px;">265-3300310028068-2</div></div>
<div class="t" style="left:1037px;top:269.0px;font-size:11px;">64711580</div>
<svg style="position:absolute;left:1096px;top:274px" width="10" height="7"><path d="M1 1L5 5L9 1" fill="none" stroke="#333" stroke-width="1.2"/></svg>
<div class="t" style="left:967px;width:200px;text-align:right;top:269.0px;font-size:11px;">0,00</div>
<div class="t" style="left:1044px;width:200px;text-align:right;top:269.0px;font-size:11px;">0,00</div>
<div class="t" style="left:1250px;top:269.0px;font-size:11px;">nema</div>
<div class="t cap" style="left:1317px;top:269.0px;font-size:11px;">NBS</div>
<svg style="position:absolute;left:1391px;top:269px" width="16" height="16"><rect x="0.5" y="0.5" width="15" height="15" rx="3" fill="#e9e9e9" stroke="#d8d8d8"/></svg>
<div style="left:1421px;top:270px;width:31px;height:15px;background:#000;border:1px solid #3a3a3a;"></div>
<div class="t" style="left:-159px;width:200px;text-align:right;top:288.0px;font-size:11px;">00015</div>
<div class="t cap" style="left:47px;top:288.0px;font-size:11px;">TEST DOO</div>
<div class="t cap" style="left:296px;top:288.0px;font-size:11px;">PRAVNO LICE</div>
<svg style="position:absolute;left:407px;top:288px" width="16" height="16"><rect x="0.5" y="0.5" width="15" height="15" rx="3" fill="#2b579a"/><path d="M3.8 8.2L6.8 11.2L12.3 4.8" fill="none" stroke="#fff" stroke-width="1.3"/></svg>
<div class="t" style="left:437px;top:288.0px;font-size:11px;">105655712</div>
<div class="t" style="left:514px;top:288.0px;font-size:11px;">21000</div>
<div class="t cap" style="left:562px;top:288.0px;font-size:11px;">NOVI SAD</div>
<div class="t cap" style="left:665px;top:288.0px;font-size:11px;">POZORIŠNI TRG 7</div>
<div style="left:861px;top:288.0px;width:171px;height:16px;overflow:hidden;"><div class="t" style="left:0;top:0;font-size:11px;">160-306192-90,160-399184-86,325-1</div></div>
<div class="t" style="left:1037px;top:288.0px;font-size:11px;">20429500</div>
<svg style="position:absolute;left:1096px;top:293px" width="10" height="7"><path d="M1 1L5 5L9 1" fill="none" stroke="#333" stroke-width="1.2"/></svg>
<div class="t" style="left:967px;width:200px;text-align:right;top:288.0px;font-size:11px;">0,00</div>
<div class="t" style="left:1044px;width:200px;text-align:right;top:288.0px;font-size:11px;">0,00</div>
<div class="t" style="left:1250px;top:288.0px;font-size:11px;">nema</div>
<div class="t cap" style="left:1317px;top:288.0px;font-size:11px;">NBS</div>
<svg style="position:absolute;left:1391px;top:288px" width="16" height="16"><rect x="0.5" y="0.5" width="15" height="15" rx="3" fill="#e9e9e9" stroke="#d8d8d8"/></svg>
<div style="left:1421px;top:289px;width:31px;height:15px;background:#000;border:1px solid #3a3a3a;"></div>
<div class="t" style="left:-159px;width:200px;text-align:right;top:307.0px;font-size:11px;">00016</div>
<div class="t cap" style="left:47px;top:307.0px;font-size:11px;">TEST DOO</div>
<div class="t cap" style="left:296px;top:307.0px;font-size:11px;">PRAVNO LICE</div>
<svg style="position:absolute;left:407px;top:307px" width="16" height="16"><rect x="0.5" y="0.5" width="15" height="15" rx="3" fill="#2b579a"/><path d="M3.8 8.2L6.8 11.2L12.3 4.8" fill="none" stroke="#fff" stroke-width="1.3"/></svg>
<div class="t" style="left:437px;top:307.0px;font-size:11px;">109574159</div>
<div class="t" style="left:514px;top:307.0px;font-size:11px;">21000</div>
<div class="t cap" style="left:562px;top:307.0px;font-size:11px;">NOVI SAD</div>
<div class="t cap" style="left:665px;top:307.0px;font-size:11px;">ZMAJ JOVINA 2</div>
<div style="left:861px;top:307.0px;width:171px;height:16px;overflow:hidden;"><div class="t" style="left:0;top:0;font-size:11px;">160-6000001510665-88,170-50020123</div></div>
<div class="t" style="left:1037px;top:307.0px;font-size:11px;">64276646</div>
<svg style="position:absolute;left:1096px;top:312px" width="10" height="7"><path d="M1 1L5 5L9 1" fill="none" stroke="#333" stroke-width="1.2"/></svg>
<div class="t" style="left:967px;width:200px;text-align:right;top:307.0px;font-size:11px;">0,00</div>
<div class="t" style="left:1044px;width:200px;text-align:right;top:307.0px;font-size:11px;">0,00</div>
<div class="t" style="left:1250px;top:307.0px;font-size:11px;">nema</div>
<div class="t cap" style="left:1317px;top:307.0px;font-size:11px;">NBS</div>
<svg style="position:absolute;left:1391px;top:307px" width="16" height="16"><rect x="0.5" y="0.5" width="15" height="15" rx="3" fill="#e9e9e9" stroke="#d8d8d8"/></svg>
<div style="left:1421px;top:308px;width:31px;height:15px;background:#000;border:1px solid #3a3a3a;"></div>
<div class="t" style="left:-159px;width:200px;text-align:right;top:326.0px;font-size:11px;">00017</div>
<div class="t cap" style="left:47px;top:326.0px;font-size:11px;">TEST DOO</div>
<div class="t cap" style="left:296px;top:326.0px;font-size:11px;">PRAVNO LICE</div>
<svg style="position:absolute;left:407px;top:326px" width="16" height="16"><rect x="0.5" y="0.5" width="15" height="15" rx="3" fill="#2b579a"/><path d="M3.8 8.2L6.8 11.2L12.3 4.8" fill="none" stroke="#fff" stroke-width="1.3"/></svg>
<div class="t" style="left:437px;top:326.0px;font-size:11px;">108831315</div>
<div class="t" style="left:514px;top:326.0px;font-size:11px;">21000</div>
<div class="t cap" style="left:562px;top:326.0px;font-size:11px;">NOVI SAD</div>
<div class="t cap" style="left:665px;top:326.0px;font-size:11px;">ZMAJEVACKI PUT &nbsp;&nbsp; 30</div>
<div style="left:861px;top:326.0px;width:171px;height:16px;overflow:hidden;"><div class="t" style="left:0;top:0;font-size:11px;">340-1000025156-20,340-11413616-1</div></div>
<div class="t" style="left:1037px;top:326.0px;font-size:11px;">63733733</div>
<svg style="position:absolute;left:1096px;top:331px" width="10" height="7"><path d="M1 1L5 5L9 1" fill="none" stroke="#333" stroke-width="1.2"/></svg>
<div class="t" style="left:967px;width:200px;text-align:right;top:326.0px;font-size:11px;">0,00</div>
<div class="t" style="left:1044px;width:200px;text-align:right;top:326.0px;font-size:11px;">0,00</div>
<div class="t" style="left:1250px;top:326.0px;font-size:11px;">nema</div>
<div class="t cap" style="left:1317px;top:326.0px;font-size:11px;">NBS</div>
<svg style="position:absolute;left:1391px;top:326px" width="16" height="16"><rect x="0.5" y="0.5" width="15" height="15" rx="3" fill="#e9e9e9" stroke="#d8d8d8"/></svg>
<div style="left:1421px;top:327px;width:31px;height:15px;background:#000;border:1px solid #3a3a3a;"></div>
<div class="t" style="left:-159px;width:200px;text-align:right;top:345.0px;font-size:11px;">00018</div>
<div class="t cap" style="left:47px;top:345.0px;font-size:11px;">TEST DOO</div>
<div class="t cap" style="left:296px;top:345.0px;font-size:11px;">PRAVNO LICE</div>
<svg style="position:absolute;left:407px;top:345px" width="16" height="16"><rect x="0.5" y="0.5" width="15" height="15" rx="3" fill="#2b579a"/><path d="M3.8 8.2L6.8 11.2L12.3 4.8" fill="none" stroke="#fff" stroke-width="1.3"/></svg>
<div class="t" style="left:437px;top:345.0px;font-size:11px;">100803502</div>
<div class="t" style="left:514px;top:345.0px;font-size:11px;"></div>
<div class="t cap" style="left:562px;top:345.0px;font-size:11px;">PETROVARADIN</div>
<div class="t cap" style="left:665px;top:345.0px;font-size:11px;">ARČIBALDA RAJSA 7</div>
<div style="left:861px;top:345.0px;width:171px;height:16px;overflow:hidden;"><div class="t" style="left:0;top:0;font-size:11px;">160-328787-11,160-43696-35,220-123</div></div>
<div class="t" style="left:1037px;top:345.0px;font-size:11px;">08282510</div>
<svg style="position:absolute;left:1096px;top:350px" width="10" height="7"><path d="M1 1L5 5L9 1" fill="none" stroke="#333" stroke-width="1.2"/></svg>
<div class="t" style="left:967px;width:200px;text-align:right;top:345.0px;font-size:11px;">0,00</div>
<div class="t" style="left:1044px;width:200px;text-align:right;top:345.0px;font-size:11px;">0,00</div>
<div class="t" style="left:1250px;top:345.0px;font-size:11px;">nema</div>
<div class="t cap" style="left:1317px;top:345.0px;font-size:11px;">NBS</div>
<svg style="position:absolute;left:1391px;top:345px" width="16" height="16"><rect x="0.5" y="0.5" width="15" height="15" rx="3" fill="#e9e9e9" stroke="#d8d8d8"/></svg>
<div style="left:1421px;top:346px;width:31px;height:15px;background:#000;border:1px solid #3a3a3a;"></div>
<div class="t" style="left:-159px;width:200px;text-align:right;top:364.0px;font-size:11px;">00019</div>
<div class="t cap" style="left:47px;top:364.0px;font-size:11px;">TEST DOO</div>
<div class="t cap" style="left:296px;top:364.0px;font-size:11px;">PRAVNO LICE</div>
<svg style="position:absolute;left:407px;top:364px" width="16" height="16"><rect x="0.5" y="0.5" width="15" height="15" rx="3" fill="#2b579a"/><path d="M3.8 8.2L6.8 11.2L12.3 4.8" fill="none" stroke="#fff" stroke-width="1.3"/></svg>
<div class="t" style="left:437px;top:364.0px;font-size:11px;">100180969</div>
<div class="t" style="left:514px;top:364.0px;font-size:11px;">11000</div>
<div class="t cap" style="left:562px;top:364.0px;font-size:11px;">BEOGRAD</div>
<div class="t cap" style="left:665px;top:364.0px;font-size:11px;">ZELENGORSKA 1 G</div>
<div style="left:861px;top:364.0px;width:171px;height:16px;overflow:hidden;"><div class="t" style="left:0;top:0;font-size:11px;">105-3165840-70,150-25022398-80</div></div>
<div class="t" style="left:1037px;top:364.0px;font-size:11px;">17162403</div>
<svg style="position:absolute;left:1096px;top:369px" width="10" height="7"><path d="M1 1L5 5L9 1" fill="none" stroke="#333" stroke-width="1.2"/></svg>
<div class="t" style="left:967px;width:200px;text-align:right;top:364.0px;font-size:11px;">0,00</div>
<div class="t" style="left:1044px;width:200px;text-align:right;top:364.0px;font-size:11px;">0,00</div>
<div class="t" style="left:1250px;top:364.0px;font-size:11px;">nema</div>
<div class="t cap" style="left:1317px;top:364.0px;font-size:11px;">NBS</div>
<svg style="position:absolute;left:1391px;top:364px" width="16" height="16"><rect x="0.5" y="0.5" width="15" height="15" rx="3" fill="#e9e9e9" stroke="#d8d8d8"/></svg>
<div style="left:1421px;top:365px;width:31px;height:15px;background:#000;border:1px solid #3a3a3a;"></div>
<div class="t" style="left:-159px;width:200px;text-align:right;top:383.0px;font-size:11px;">00020</div>
<div class="t cap" style="left:47px;top:383.0px;font-size:11px;">TEST DOO</div>
<div class="t cap" style="left:296px;top:383.0px;font-size:11px;">PRAVNO LICE</div>
<svg style="position:absolute;left:407px;top:383px" width="16" height="16"><rect x="0.5" y="0.5" width="15" height="15" rx="3" fill="#2b579a"/><path d="M3.8 8.2L6.8 11.2L12.3 4.8" fill="none" stroke="#fff" stroke-width="1.3"/></svg>
<div class="t" style="left:437px;top:383.0px;font-size:11px;">110438606</div>
<div class="t" style="left:514px;top:383.0px;font-size:11px;">21234</div>
<div class="t cap" style="left:562px;top:383.0px;font-size:11px;">BAČKI JARAK</div>
<div class="t cap" style="left:665px;top:383.0px;font-size:11px;">NOVOSADSKA 106</div>
<div style="left:861px;top:383.0px;width:171px;height:16px;overflow:hidden;"><div class="t" style="left:0;top:0;font-size:11px;">325-9500600011658-93</div></div>
<div class="t" style="left:1037px;top:383.0px;font-size:11px;">64858840</div>
<svg style="position:absolute;left:1096px;top:388px" width="10" height="7"><path d="M1 1L5 5L9 1" fill="none" stroke="#333" stroke-width="1.2"/></svg>
<div class="t" style="left:967px;width:200px;text-align:right;top:383.0px;font-size:11px;">15,00</div>
<div class="t" style="left:1044px;width:200px;text-align:right;top:383.0px;font-size:11px;">0,00</div>
<div class="t" style="left:1250px;top:383.0px;font-size:11px;">nema</div>
<div class="t cap" style="left:1317px;top:383.0px;font-size:11px;">NBS</div>
<svg style="position:absolute;left:1391px;top:383px" width="16" height="16"><rect x="0.5" y="0.5" width="15" height="15" rx="3" fill="#e9e9e9" stroke="#d8d8d8"/></svg>
<div style="left:1421px;top:384px;width:31px;height:15px;background:#000;border:1px solid #3a3a3a;"></div>
<div class="t" style="left:-159px;width:200px;text-align:right;top:402.0px;font-size:11px;">00021</div>
<div class="t cap" style="left:47px;top:402.0px;font-size:11px;">TEST DOO</div>
<div class="t cap" style="left:296px;top:402.0px;font-size:11px;">PRAVNO LICE</div>
<svg style="position:absolute;left:407px;top:402px" width="16" height="16"><rect x="0.5" y="0.5" width="15" height="15" rx="3" fill="#2b579a"/><path d="M3.8 8.2L6.8 11.2L12.3 4.8" fill="none" stroke="#fff" stroke-width="1.3"/></svg>
<div class="t" style="left:437px;top:402.0px;font-size:11px;">100974349</div>
<div class="t" style="left:514px;top:402.0px;font-size:11px;">11030</div>
<div class="t cap" style="left:562px;top:402.0px;font-size:11px;">ČUKARICA</div>
<div class="t cap" style="left:665px;top:402.0px;font-size:11px;">KNEZA VISESLAVA 3/11</div>
<div style="left:861px;top:402.0px;width:171px;height:16px;overflow:hidden;"><div class="t" style="left:0;top:0;font-size:11px;">160-6000000027803-60,265-3300312</div></div>
<div class="t" style="left:1037px;top:402.0px;font-size:11px;">17176757</div>
<svg style="position:absolute;left:1096px;top:407px" width="10" height="7"><path d="M1 1L5 5L9 1" fill="none" stroke="#333" stroke-width="1.2"/></svg>
<div class="t" style="left:967px;width:200px;text-align:right;top:402.0px;font-size:11px;">0,00</div>
<div class="t" style="left:1044px;width:200px;text-align:right;top:402.0px;font-size:11px;">0,00</div>
<div class="t" style="left:1250px;top:402.0px;font-size:11px;">nema</div>
<div class="t cap" style="left:1317px;top:402.0px;font-size:11px;">NBS</div>
<svg style="position:absolute;left:1391px;top:402px" width="16" height="16"><rect x="0.5" y="0.5" width="15" height="15" rx="3" fill="#e9e9e9" stroke="#d8d8d8"/></svg>
<div style="left:1421px;top:403px;width:31px;height:15px;background:#000;border:1px solid #3a3a3a;"></div>
<div class="t" style="left:-159px;width:200px;text-align:right;top:421.0px;font-size:11px;">00022</div>
<div class="t cap" style="left:47px;top:421.0px;font-size:11px;">TEST DOO</div>
<div class="t cap" style="left:296px;top:421.0px;font-size:11px;">PRAVNO LICE</div>
<svg style="position:absolute;left:407px;top:421px" width="16" height="16"><rect x="0.5" y="0.5" width="15" height="15" rx="3" fill="#2b579a"/><path d="M3.8 8.2L6.8 11.2L12.3 4.8" fill="none" stroke="#fff" stroke-width="1.3"/></svg>
<div class="t" style="left:437px;top:421.0px;font-size:11px;">105564523</div>
<div class="t" style="left:514px;top:421.0px;font-size:11px;">11000</div>
<div class="t cap" style="left:562px;top:421.0px;font-size:11px;">BEOGRAD</div>
<div class="t cap" style="left:665px;top:421.0px;font-size:11px;">PARTIZANSKE AVIJACIJE 4</div>
<div style="left:861px;top:421.0px;width:171px;height:16px;overflow:hidden;"><div class="t" style="left:0;top:0;font-size:11px;">160-493199-20,170-30023197000-12</div></div>
<div class="t" style="left:1037px;top:421.0px;font-size:11px;">20410060</div>
<svg style="position:absolute;left:1096px;top:426px" width="10" height="7"><path d="M1 1L5 5L9 1" fill="none" stroke="#333" stroke-width="1.2"/></svg>
<div class="t" style="left:967px;width:200px;text-align:right;top:421.0px;font-size:11px;">0,00</div>
<div class="t" style="left:1044px;width:200px;text-align:right;top:421.0px;font-size:11px;">0,00</div>
<div class="t" style="left:1250px;top:421.0px;font-size:11px;">nema</div>
<div class="t cap" style="left:1317px;top:421.0px;font-size:11px;">NBS</div>
<svg style="position:absolute;left:1391px;top:421px" width="16" height="16"><rect x="0.5" y="0.5" width="15" height="15" rx="3" fill="#e9e9e9" stroke="#d8d8d8"/></svg>
<div style="left:1421px;top:422px;width:31px;height:15px;background:#000;border:1px solid #3a3a3a;"></div>
<div class="t" style="left:-159px;width:200px;text-align:right;top:440.0px;font-size:11px;">00023</div>
<div class="t cap" style="left:47px;top:440.0px;font-size:11px;">TEST DOO</div>
<div class="t cap" style="left:296px;top:440.0px;font-size:11px;">PRAVNO LICE</div>
<svg style="position:absolute;left:407px;top:440px" width="16" height="16"><rect x="0.5" y="0.5" width="15" height="15" rx="3" fill="#2b579a"/><path d="M3.8 8.2L6.8 11.2L12.3 4.8" fill="none" stroke="#fff" stroke-width="1.3"/></svg>
<div class="t" style="left:437px;top:440.0px;font-size:11px;">111458429</div>
<div class="t" style="left:514px;top:440.0px;font-size:11px;">21000</div>
<div class="t cap" style="left:562px;top:440.0px;font-size:11px;">NOVI SAD</div>
<div class="t cap" style="left:665px;top:440.0px;font-size:11px;">BULEVAR JOVANA DUCICA 39V</div>
<div style="left:861px;top:440.0px;width:171px;height:16px;overflow:hidden;"><div class="t" style="left:0;top:0;font-size:11px;">205-267980-84,205-528209-53</div></div>
<div class="t" style="left:1037px;top:440.0px;font-size:11px;">65424487</div>
<svg style="position:absolute;left:1096px;top:445px" width="10" height="7"><path d="M1 1L5 5L9 1" fill="none" stroke="#333" stroke-width="1.2"/></svg>
<div class="t" style="left:967px;width:200px;text-align:right;top:440.0px;font-size:11px;">0,00</div>
<div class="t" style="left:1044px;width:200px;text-align:right;top:440.0px;font-size:11px;">0,00</div>
<div class="t" style="left:1250px;top:440.0px;font-size:11px;">nema</div>
<div class="t cap" style="left:1317px;top:440.0px;font-size:11px;">NBS</div>
<svg style="position:absolute;left:1391px;top:440px" width="16" height="16"><rect x="0.5" y="0.5" width="15" height="15" rx="3" fill="#e9e9e9" stroke="#d8d8d8"/></svg>
<div style="left:1421px;top:441px;width:31px;height:15px;background:#000;border:1px solid #3a3a3a;"></div>
<div class="t" style="left:-159px;width:200px;text-align:right;top:459.0px;font-size:11px;">00024</div>
<div class="t cap" style="left:47px;top:459.0px;font-size:11px;">TEST DOO</div>
<div class="t cap" style="left:296px;top:459.0px;font-size:11px;">PRAVNO LICE</div>
<svg style="position:absolute;left:407px;top:459px" width="16" height="16"><rect x="0.5" y="0.5" width="15" height="15" rx="3" fill="#2b579a"/><path d="M3.8 8.2L6.8 11.2L12.3 4.8" fill="none" stroke="#fff" stroke-width="1.3"/></svg>
<div class="t" style="left:437px;top:459.0px;font-size:11px;">112433364</div>
<div class="t" style="left:514px;top:459.0px;font-size:11px;">21000</div>
<div class="t cap" style="left:562px;top:459.0px;font-size:11px;">NOVI SAD</div>
<div class="t cap" style="left:665px;top:459.0px;font-size:11px;">KLISANSKI PUT 167</div>
<div style="left:861px;top:459.0px;width:171px;height:16px;overflow:hidden;"><div class="t" style="left:0;top:0;font-size:11px;">325-9500700186522-28</div></div>
<div class="t" style="left:1037px;top:459.0px;font-size:11px;">66099890</div>
<svg style="position:absolute;left:1096px;top:464px" width="10" height="7"><path d="M1 1L5 5L9 1" fill="none" stroke="#333" stroke-width="1.2"/></svg>
<div class="t" style="left:967px;width:200px;text-align:right;top:459.0px;font-size:11px;">0,00</div>
<div class="t" style="left:1044px;width:200px;text-align:right;top:459.0px;font-size:11px;">0,00</div>
<div class="t" style="left:1250px;top:459.0px;font-size:11px;">nema</div>
<div class="t cap" style="left:1317px;top:459.0px;font-size:11px;">NBS</div>
<svg style="position:absolute;left:1391px;top:459px" width="16" height="16"><rect x="0.5" y="0.5" width="15" height="15" rx="3" fill="#e9e9e9" stroke="#d8d8d8"/></svg>
<div style="left:1421px;top:460px;width:31px;height:15px;background:#000;border:1px solid #3a3a3a;"></div>
<div class="t" style="left:-159px;width:200px;text-align:right;top:478.0px;font-size:11px;">00025</div>
<div class="t cap" style="left:47px;top:478.0px;font-size:11px;">TEST DOO</div>
<div class="t cap" style="left:296px;top:478.0px;font-size:11px;">PRAVNO LICE</div>
<svg style="position:absolute;left:407px;top:478px" width="16" height="16"><rect x="0.5" y="0.5" width="15" height="15" rx="3" fill="#e9e9e9" stroke="#d8d8d8"/></svg>
<div class="t" style="left:437px;top:478.0px;font-size:11px;">109410851</div>
<div class="t" style="left:514px;top:478.0px;font-size:11px;">21000</div>
<div class="t cap" style="left:562px;top:478.0px;font-size:11px;">NOVI SAD</div>
<div class="t cap" style="left:665px;top:478.0px;font-size:11px;">PETRA DOBROVICA &nbsp;&nbsp; 12</div>
<div style="left:861px;top:478.0px;width:171px;height:16px;overflow:hidden;"><div class="t" style="left:0;top:0;font-size:11px;">340-11430661-66</div></div>
<div class="t" style="left:1037px;top:478.0px;font-size:11px;">64153781</div>
<svg style="position:absolute;left:1096px;top:483px" width="10" height="7"><path d="M1 1L5 5L9 1" fill="none" stroke="#333" stroke-width="1.2"/></svg>
<div class="t" style="left:967px;width:200px;text-align:right;top:478.0px;font-size:11px;">0,00</div>
<div class="t" style="left:1044px;width:200px;text-align:right;top:478.0px;font-size:11px;">0,00</div>
<div class="t" style="left:1250px;top:478.0px;font-size:11px;">nema</div>
<div class="t cap" style="left:1317px;top:478.0px;font-size:11px;">NBS</div>
<svg style="position:absolute;left:1391px;top:478px" width="16" height="16"><rect x="0.5" y="0.5" width="15" height="15" rx="3" fill="#e9e9e9" stroke="#d8d8d8"/></svg>
<div style="left:1421px;top:479px;width:31px;height:15px;background:#000;border:1px solid #3a3a3a;"></div>
<div class="t" style="left:-159px;width:200px;text-align:right;top:497.0px;font-size:11px;">00026</div>
<div class="t cap" style="left:47px;top:497.0px;font-size:11px;">TEST DOO</div>
<div class="t cap" style="left:296px;top:497.0px;font-size:11px;">PRAVNO LICE</div>
<svg style="position:absolute;left:407px;top:497px" width="16" height="16"><rect x="0.5" y="0.5" width="15" height="15" rx="3" fill="#2b579a"/><path d="M3.8 8.2L6.8 11.2L12.3 4.8" fill="none" stroke="#fff" stroke-width="1.3"/></svg>
<div class="t" style="left:437px;top:497.0px;font-size:11px;">105946291</div>
<div class="t" style="left:514px;top:497.0px;font-size:11px;">21000</div>
<div class="t cap" style="left:562px;top:497.0px;font-size:11px;">NOVI SAD</div>
<div class="t cap" style="left:665px;top:497.0px;font-size:11px;">ĆIRILA I METODIJA 102</div>
<div style="left:861px;top:497.0px;width:171px;height:16px;overflow:hidden;"><div class="t" style="left:0;top:0;font-size:11px;">160-438939-34,160-60000009853612</div></div>
<div class="t" style="left:1037px;top:497.0px;font-size:11px;">20493089</div>
<svg style="position:absolute;left:1096px;top:502px" width="10" height="7"><path d="M1 1L5 5L9 1" fill="none" stroke="#333" stroke-width="1.2"/></svg>
<div class="t" style="left:967px;width:200px;text-align:right;top:497.0px;font-size:11px;">0,00</div>
<div class="t" style="left:1044px;width:200px;text-align:right;top:497.0px;font-size:11px;">0,00</div>
<div class="t" style="left:1250px;top:497.0px;font-size:11px;">nema</div>
<div class="t cap" style="left:1317px;top:497.0px;font-size:11px;">NBS</div>
<svg style="position:absolute;left:1391px;top:497px" width="16" height="16"><rect x="0.5" y="0.5" width="15" height="15" rx="3" fill="#e9e9e9" stroke="#d8d8d8"/></svg>
<div style="left:1421px;top:498px;width:31px;height:15px;background:#000;border:1px solid #3a3a3a;"></div>
<div class="t" style="left:-159px;width:200px;text-align:right;top:516.0px;font-size:11px;">00027</div>
<div class="t cap" style="left:47px;top:516.0px;font-size:11px;">TEST DOO</div>
<div class="t cap" style="left:296px;top:516.0px;font-size:11px;">PRAVNO LICE</div>
<svg style="position:absolute;left:407px;top:516px" width="16" height="16"><rect x="0.5" y="0.5" width="15" height="15" rx="3" fill="#2b579a"/><path d="M3.8 8.2L6.8 11.2L12.3 4.8" fill="none" stroke="#fff" stroke-width="1.3"/></svg>
<div class="t" style="left:437px;top:516.0px;font-size:11px;">105413714</div>
<div class="t" style="left:514px;top:516.0px;font-size:11px;">24000</div>
<div class="t cap" style="left:562px;top:516.0px;font-size:11px;">SUBOTICA</div>
<div class="t cap" style="left:665px;top:516.0px;font-size:11px;">SEGEDINSKI PUT 80</div>
<div style="left:861px;top:516.0px;width:171px;height:16px;overflow:hidden;"><div class="t" style="left:0;top:0;font-size:11px;">105-90066-73,190-34660-88,200-2123</div></div>
<div class="t" style="left:1037px;top:516.0px;font-size:11px;">20368071</div>
<svg style="position:absolute;left:1096px;top:521px" width="10" height="7"><path d="M1 1L5 5L9 1" fill="none" stroke="#333" stroke-width="1.2"/></svg>
<div class="t" style="left:967px;width:200px;text-align:right;top:516.0px;font-size:11px;">0,00</div>
<div class="t" style="left:1044px;width:200px;text-align:right;top:516.0px;font-size:11px;">0,00</div>
<div class="t" style="left:1250px;top:516.0px;font-size:11px;">nema</div>
<div class="t cap" style="left:1317px;top:516.0px;font-size:11px;">NBS</div>
<svg style="position:absolute;left:1391px;top:516px" width="16" height="16"><rect x="0.5" y="0.5" width="15" height="15" rx="3" fill="#e9e9e9" stroke="#d8d8d8"/></svg>
<div style="left:1421px;top:517px;width:31px;height:15px;background:#000;border:1px solid #3a3a3a;"></div>
<div class="t" style="left:-159px;width:200px;text-align:right;top:535.0px;font-size:11px;">00028</div>
<div class="t cap" style="left:47px;top:535.0px;font-size:11px;">TEST DOO</div>
<div class="t cap" style="left:296px;top:535.0px;font-size:11px;">PRAVNO LICE</div>
<svg style="position:absolute;left:407px;top:535px" width="16" height="16"><rect x="0.5" y="0.5" width="15" height="15" rx="3" fill="#2b579a"/><path d="M3.8 8.2L6.8 11.2L12.3 4.8" fill="none" stroke="#fff" stroke-width="1.3"/></svg>
<div class="t" style="left:437px;top:535.0px;font-size:11px;">113491960</div>
<div class="t" style="left:514px;top:535.0px;font-size:11px;">21000</div>
<div class="t cap" style="left:562px;top:535.0px;font-size:11px;">NOVI SAD</div>
<div class="t cap" style="left:665px;top:535.0px;font-size:11px;">VALENTINA VODNIKA 19</div>
<div style="left:861px;top:535.0px;width:171px;height:16px;overflow:hidden;"><div class="t" style="left:0;top:0;font-size:11px;">160-6000001634316-63,160-60000123</div></div>
<div class="t" style="left:1037px;top:535.0px;font-size:11px;">66863492</div>
<svg style="position:absolute;left:1096px;top:540px" width="10" height="7"><path d="M1 1L5 5L9 1" fill="none" stroke="#333" stroke-width="1.2"/></svg>
<div class="t" style="left:967px;width:200px;text-align:right;top:535.0px;font-size:11px;">0,00</div>
<div class="t" style="left:1044px;width:200px;text-align:right;top:535.0px;font-size:11px;">0,00</div>
<div class="t" style="left:1250px;top:535.0px;font-size:11px;">nema</div>
<div class="t cap" style="left:1317px;top:535.0px;font-size:11px;">NBS</div>
<svg style="position:absolute;left:1391px;top:535px" width="16" height="16"><rect x="0.5" y="0.5" width="15" height="15" rx="3" fill="#e9e9e9" stroke="#d8d8d8"/></svg>
<div style="left:1421px;top:536px;width:31px;height:15px;background:#000;border:1px solid #3a3a3a;"></div>
</div>
<div style="left:1690px;top:404px;width:17px;height:547px;background:#e2e2e2;"></div>
<svg style="position:absolute;left:1693px;top:408px;" width="10" height="8" viewBox="0 0 10 8"><path d="M5 0.5L9.5 7.5H0.5z" fill="#a3a3a3"/></svg>
<div style="left:1695px;top:421px;width:7px;height:18px;background:#a3a3a3;border-radius:4px;"></div>
<svg style="position:absolute;left:1693px;top:939px;" width="10" height="8" viewBox="0 0 10 8"><path d="M5 7.5L9.5 0.5H0.5z" fill="#a3a3a3"/></svg>
<div style="left:235px;top:951px;width:1455px;height:19px;background:#e6e6e6;"></div>
<svg style="position:absolute;left:240px;top:955px;" width="13" height="10" viewBox="0 0 13 10"><path d="M1 0.5v9" stroke="#6e6e6e" stroke-width="1.1"/><path d="M7 0.5L3 5L7 9.5M11.5 0.5L7.5 5L11.5 9.5" fill="none" stroke="#6e6e6e" stroke-width="1.1"/></svg>
<svg style="position:absolute;left:266px;top:955px;" width="10" height="10" viewBox="0 0 10 10"><path d="M4.5 0.5L0.8 5L4.5 9.5M9 0.5L5.3 5L9 9.5" fill="none" stroke="#6e6e6e" stroke-width="1.1"/></svg>
<svg style="position:absolute;left:292px;top:955px;" width="6" height="10" viewBox="0 0 6 10"><path d="M5 0.5L1 5L5 9.5" fill="none" stroke="#6e6e6e" stroke-width="1.1"/></svg>
<div class="t" style="left:314px;top:952px;font-size:12.6px;color:#1e1e1e;">1 od 821</div>
<svg style="position:absolute;left:380px;top:955px;" width="6" height="10" viewBox="0 0 6 10"><path d="M1 0.5L5 5L1 9.5" fill="none" stroke="#6e6e6e" stroke-width="1.1"/></svg>
<svg style="position:absolute;left:402px;top:955px;" width="10" height="10" viewBox="0 0 10 10"><path d="M1 0.5L4.7 5L1 9.5M5.5 0.5L9.2 5L5.5 9.5" fill="none" stroke="#6e6e6e" stroke-width="1.1"/></svg>
<svg style="position:absolute;left:425px;top:955px;" width="13" height="10" viewBox="0 0 13 10"><path d="M1.5 0.5L5.5 5L1.5 9.5M6 0.5L10 5L6 9.5" fill="none" stroke="#6e6e6e" stroke-width="1.1"/><path d="M12 0.5v9" stroke="#6e6e6e" stroke-width="1.1"/></svg>
<svg style="position:absolute;left:450px;top:955px;" width="10" height="10" viewBox="0 0 10 10"><path d="M5 0.5v9M0.5 5h9" stroke="#1a9a72" stroke-width="1.8"/></svg>
<svg style="position:absolute;left:474px;top:955px;" width="10" height="10" viewBox="0 0 10 10"><path d="M0.5 5h9" stroke="#e5566a" stroke-width="1.6"/></svg>
<svg style="position:absolute;left:497px;top:954px;" width="12" height="12" viewBox="0 0 12 12"><path d="M1.5 10.5L2.2 7.8L8.8 1.2a1 1 0 0 1 1.4 0l0.6 0.6a1 1 0 0 1 0 1.4L4.2 9.8z" fill="none" stroke="#444" stroke-width="1.1" stroke-linejoin="round"/><path d="M7.6 2.4L9.6 4.4" stroke="#444" stroke-width="1"/></svg>
<svg style="position:absolute;left:521px;top:955px;" width="12" height="10" viewBox="0 0 12 10"><path d="M1 5.5L4.2 8.7L11 1.5" fill="none" stroke="#aaa" stroke-width="1.2"/></svg>
<svg style="position:absolute;left:546px;top:955px;" width="10" height="10" viewBox="0 0 10 10"><path d="M1 1L9 9M9 1L1 9" stroke="#999" stroke-width="1.1"/></svg>
<svg style="position:absolute;left:569px;top:955px;" width="12" height="10" viewBox="0 0 12 10"><path d="M11 3.5H4.5a3.2 3.2 0 0 0 0 6.4H6" fill="none" stroke="#333" stroke-width="1.3"/><path d="M8.5 0.8L11.2 3.5L8.5 6.2" fill="none" stroke="#333" stroke-width="1.3"/></svg>
<svg style="position:absolute;left:594px;top:955px;" width="10" height="10" viewBox="0 0 10 10"><path d="M5 0v10M0.7 2.5l8.6 5M0.7 7.5l8.6-5" stroke="#222" stroke-width="1.4"/></svg>
<svg style="position:absolute;left:615px;top:954px;" width="12" height="12" viewBox="0 0 12 12"><path d="M7 2.5v9M3.2 4.8l7.6 4.4M3.2 9.2l7.6-4.4" stroke="#555" stroke-width="1.2"/><path d="M0.5 0v4.5M0.5 0l3 3" stroke="#555" stroke-width="0.9"/></svg>
<svg style="position:absolute;left:640px;top:954px;" width="14" height="13" viewBox="0 0 14 13"><path d="M0.8 0.8h12.4L8.3 6.5v5.7l-2.6-1.5V6.5z" fill="none" stroke="#333" stroke-width="1.2" stroke-linejoin="round"/></svg>
<div style="left:668px;top:951px;width:1022px;height:19px;background:#e1e1e1;"></div>
<div style="left:232px;top:973px;width:1477px;height:26px;background:#e4e4e4;border-left:1px solid #d0d0d0;border-right:1px solid #d0d0d0;"></div>
<svg style="position:absolute;left:236px;top:978px;" width="16" height="16" viewBox="0 0 16 16"><rect x="0.5" y="0.5" width="15" height="15" rx="3" fill="#e9e9e9" stroke="#d4d4d4"/></svg>
<div class="t" style="left:257px;top:978px;font-size:11.2px;">F2-IZMENE</div>
<div style="left:331px;top:976px;width:1px;height:22px;background:#d0d0d0;"></div>
<svg style="position:absolute;left:341px;top:979px;" width="16" height="14" viewBox="0 0 16 14"><rect x="0" y="1.0" width="15" height="1.3" fill="#555"/><rect x="0" y="3.6" width="15" height="1.3" fill="#555"/><rect x="0" y="6.2" width="15" height="1.3" fill="#555"/><rect x="0" y="8.8" width="15" height="1.3" fill="#555"/><rect x="0" y="11.4" width="15" height="1.3" fill="#555"/></svg>
<div style="left:364px;top:976px;width:1px;height:22px;background:#d0d0d0;"></div>
<svg style="position:absolute;left:368px;top:978px;" width="16" height="16" viewBox="0 0 16 16"><rect x="0.5" y="0.5" width="15" height="15" rx="3" fill="#e9e9e9" stroke="#d4d4d4"/></svg>
<div class="t" style="left:389px;top:978px;font-size:11.5px;">F3 - PRIKAŽI SVE</div>
<div style="left:491px;top:976px;width:1px;height:22px;background:#d0d0d0;"></div>
<div style="left:496px;top:975px;width:32px;height:23px;background:#ececec;border-radius:3px;"></div>
<svg style="position:absolute;left:503px;top:979px;" width="20" height="15" viewBox="0 0 20 15"><rect x="0.0" y="0.0" width="5" height="4" fill="#bbb"/><rect x="6.3" y="0.0" width="5" height="4" fill="#f5b800"/><rect x="12.6" y="0.0" width="5" height="4" fill="#bbb"/><rect x="0.0" y="5.0" width="5" height="4" fill="#d11"/><rect x="6.3" y="5.0" width="5" height="4" fill="#bbb"/><rect x="12.6" y="5.0" width="5" height="4" fill="#bbb"/><rect x="0.0" y="10.0" width="5" height="4" fill="#bbb"/><rect x="6.3" y="10.0" width="5" height="4" fill="#bbb"/><rect x="12.6" y="10.0" width="5" height="4" fill="#1a9a3a"/></svg>
<div style="left:529px;top:976px;width:1px;height:22px;background:#d0d0d0;"></div>
<div style="left:1395px;top:976px;width:1px;height:22px;background:#d0d0d0;"></div>
<div style="left:1400px;top:975px;width:87px;height:23px;background:#ebebeb;border-radius:4px;box-shadow:0 1px 1px #c4c4c4;"></div>
<div class="t" style="left:1407px;top:978.5px;font-size:12.3px;">El.servisi</div>
<svg style="position:absolute;left:1474px;top:984px;" width="8" height="5" viewBox="0 0 8 5"><path d="M0.5 0.5h7L4 4.5z" fill="#333"/></svg>
<div style="left:1492px;top:975px;width:78px;height:23px;background:#e8e8e8;border-radius:4px;box-shadow:0 1px 1px #d4d4d4;"></div>
<div class="t" style="left:1492px;top:978.5px;width:78px;text-align:center;font-size:12.3px;color:#b0b0b0;">Kartica <u>O</u>P</div>
<div style="left:1572px;top:976px;width:1px;height:22px;background:#d0d0d0;"></div>
<div style="left:1575px;top:975px;width:78px;height:23px;background:#ebebeb;border-radius:4px;box-shadow:0 1px 1px #c4c4c4;"></div>
<div class="t" style="left:1575px;top:978.5px;width:78px;text-align:center;font-size:12.3px;">Kartica F<u>I</u>N</div>
<div style="left:1656px;top:976px;width:1px;height:22px;background:#d0d0d0;"></div>
<div style="left:1659px;top:975px;width:47px;height:23px;background:#e8e8e8;border-radius:4px;box-shadow:0 1px 1px #d4d4d4;"></div>
<div class="t" style="left:1659px;top:978.5px;width:47px;text-align:center;font-size:12.3px;color:#b0b0b0;">OK</div>
<div style="left:1709px;top:124px;width:3px;height:880px;background:#d6d6d6;"></div>
<div style="left:1712px;top:98px;width:47px;height:26px;border:1px solid #d2d2d2;border-bottom:none;border-radius:4px 4px 0 0;background:#e6e6e6;"></div>
<div style="left:1717px;top:98px;width:38px;height:3px;background:#2b579a;"></div>
<div class="t" style="left:1719px;top:104px;font-size:12.2px;">Planer</div>
<div style="left:1759px;top:98px;width:71px;height:26px;border:1px solid #d2d2d2;border-bottom:none;border-radius:4px 4px 0 0;background:#e4e4e4;"></div>
<div class="t" style="left:1766px;top:104px;font-size:12.2px;">Za štampu</div>
<div style="left:1831px;top:98px;width:49px;height:26px;border:1px solid #d2d2d2;border-bottom:none;border-radius:4px 4px 0 0;background:#e4e4e4;"></div>
<div class="t" style="left:1838px;top:104px;font-size:12.2px;">Tajmeri</div>
<div style="left:1712px;top:123px;width:196px;height:881px;background:#e4e4e4;"></div>
<div style="left:1712px;top:124px;width:39px;height:880px;background:#ebebeb;"></div>
<div style="left:1750px;top:144px;width:1px;height:860px;background:#b9b9b9;"></div>
<div class="t" style="left:1742px;top:127.5px;width:160px;text-align:center;font-size:12.3px;font-weight:bold;color:#222;">FRIDAY, 7 FEBRUARY</div>
<div style="left:1719px;top:144px;width:183px;height:1px;background:#b9b9b9;"></div>
<div style="left:1712px;top:124px;width:196px;height:880px;overflow:hidden;">
<div style="left:39px;top:42px;width:151px;height:0;border-top:1px dotted #b0b0b0;"></div>
<div class="t" style="left:-3px;width:39px;text-align:center;top:23px;font-size:12.3px;">4</div>
<div class="t" style="left:25px;top:21px;font-size:8.5px;line-height:10px;color:#333;">AM</div>
<div style="left:7px;top:64px;width:183px;height:1px;background:#b9b9b9;"></div>
<div style="left:39px;top:86px;width:151px;height:0;border-top:1px dotted #b0b0b0;"></div>
<div class="t" style="left:-3px;width:39px;text-align:center;top:67px;font-size:12.3px;">5</div>
<div style="left:7px;top:108px;width:183px;height:1px;background:#b9b9b9;"></div>
<div style="left:39px;top:130px;width:151px;height:0;border-top:1px dotted #b0b0b0;"></div>
<div class="t" style="left:-3px;width:39px;text-align:center;top:111px;font-size:12.3px;">6</div>
<div style="left:7px;top:152px;width:183px;height:1px;background:#b9b9b9;"></div>
<div style="left:39px;top:174px;width:151px;height:0;border-top:1px dotted #b0b0b0;"></div>
<div class="t" style="left:-3px;width:39px;text-align:center;top:155px;font-size:12.3px;">7</div>
<div style="left:7px;top:196px;width:183px;height:1px;background:#b9b9b9;"></div>
<div style="left:39px;top:218px;width:151px;height:0;border-top:1px dotted #b0b0b0;"></div>
<div class="t" style="left:-3px;width:39px;text-align:center;top:199px;font-size:12.3px;">8</div>
<div style="left:7px;top:240px;width:183px;height:1px;background:#b9b9b9;"></div>
<div style="left:39px;top:262px;width:151px;height:0;border-top:1px dotted #b0b0b0;"></div>
<div class="t" style="left:-3px;width:39px;text-align:center;top:243px;font-size:12.3px;">9</div>
<div style="left:7px;top:284px;width:183px;height:1px;background:#b9b9b9;"></div>
<div style="left:39px;top:306px;width:151px;height:0;border-top:1px dotted #b0b0b0;"></div>
<div class="t" style="left:-3px;width:39px;text-align:center;top:287px;font-size:12.3px;">10</div>
<div style="left:7px;top:328px;width:183px;height:1px;background:#b9b9b9;"></div>
<div style="left:39px;top:350px;width:151px;height:0;border-top:1px dotted #b0b0b0;"></div>
<div class="t" style="left:-3px;width:39px;text-align:center;top:331px;font-size:12.3px;">11</div>
<div style="left:7px;top:372px;width:183px;height:1px;background:#b9b9b9;"></div>
<div style="left:39px;top:394px;width:151px;height:0;border-top:1px dotted #b0b0b0;"></div>
<div class="t" style="left:-3px;width:39px;text-align:center;top:375px;font-size:12.3px;">12</div>
<div class="t" style="left:25px;top:373px;font-size:8.5px;line-height:10px;color:#333;">PM</div>
<div style="left:7px;top:416px;width:183px;height:1px;background:#b9b9b9;"></div>
<div style="left:39px;top:438px;width:151px;height:0;border-top:1px dotted #b0b0b0;"></div>
<div class="t" style="left:-3px;width:39px;text-align:center;top:419px;font-size:12.3px;">1</div>
<div style="left:7px;top:460px;width:183px;height:1px;background:#b9b9b9;"></div>
<div style="left:39px;top:482px;width:151px;height:0;border-top:1px dotted #b0b0b0;"></div>
<div class="t" style="left:-3px;width:39px;text-align:center;top:463px;font-size:12.3px;">2</div>
<div style="left:7px;top:504px;width:183px;height:1px;background:#b9b9b9;"></div>
<div style="left:39px;top:526px;width:151px;height:0;border-top:1px dotted #b0b0b0;"></div>
<div class="t" style="left:-3px;width:39px;text-align:center;top:507px;font-size:12.3px;">3</div>
<div style="left:7px;top:548px;width:183px;height:1px;background:#b9b9b9;"></div>
<div style="left:39px;top:570px;width:151px;height:0;border-top:1px dotted #b0b0b0;"></div>
<div class="t" style="left:-3px;width:39px;text-align:center;top:551px;font-size:12.3px;">4</div>
<div style="left:7px;top:592px;width:183px;height:1px;background:#b9b9b9;"></div>
<div style="left:39px;top:614px;width:151px;height:0;border-top:1px dotted #b0b0b0;"></div>
<div class="t" style="left:-3px;width:39px;text-align:center;top:595px;font-size:12.3px;">5</div>
<div style="left:7px;top:636px;width:183px;height:1px;background:#b9b9b9;"></div>
<div style="left:39px;top:658px;width:151px;height:0;border-top:1px dotted #b0b0b0;"></div>
<div class="t" style="left:-3px;width:39px;text-align:center;top:639px;font-size:12.3px;">6</div>
<div style="left:7px;top:680px;width:183px;height:1px;background:#b9b9b9;"></div>
<div style="left:39px;top:702px;width:151px;height:0;border-top:1px dotted #b0b0b0;"></div>
<div class="t" style="left:-3px;width:39px;text-align:center;top:683px;font-size:12.3px;">7</div>
<div style="left:7px;top:724px;width:183px;height:1px;background:#b9b9b9;"></div>
<div style="left:39px;top:746px;width:151px;height:0;border-top:1px dotted #b0b0b0;"></div>
<div class="t" style="left:-3px;width:39px;text-align:center;top:727px;font-size:12.3px;">8</div>
<div style="left:7px;top:768px;width:183px;height:1px;background:#b9b9b9;"></div>
<div style="left:39px;top:790px;width:151px;height:0;border-top:1px dotted #b0b0b0;"></div>
<div class="t" style="left:-3px;width:39px;text-align:center;top:771px;font-size:12.3px;">9</div>
<div style="left:7px;top:812px;width:183px;height:1px;background:#b9b9b9;"></div>
<div style="left:39px;top:834px;width:151px;height:0;border-top:1px dotted #b0b0b0;"></div>
<div class="t" style="left:-3px;width:39px;text-align:center;top:815px;font-size:12.3px;">10</div>
<div style="left:7px;top:856px;width:183px;height:1px;background:#b9b9b9;"></div>
<div style="left:39px;top:878px;width:151px;height:0;border-top:1px dotted #b0b0b0;"></div>
<div class="t" style="left:-3px;width:39px;text-align:center;top:859px;font-size:12.3px;">11</div>
</div>
<div style="left:1717px;top:413px;width:32px;height:3px;background:#9a9a9a;"></div>
<svg style="position:absolute;left:1905px;top:127px;" width="10" height="8" viewBox="0 0 10 8"><path d="M5 0.5L9.5 7.5H0.5z" fill="#a3a3a3"/></svg>
<div style="left:1907px;top:280px;width:7px;height:688px;background:#a3a3a3;border-radius:4px;"></div>
<svg style="position:absolute;left:1905px;top:991px;" width="10" height="8" viewBox="0 0 10 8"><path d="M5 7.5L9.5 0.5H0.5z" fill="#a3a3a3"/></svg>
<div style="left:1750px;top:481px;width:26px;height:164px;background:#f3f3f3;border-radius:0 4px 4px 0;box-shadow:0 0 1px #bbb;"></div>
<svg style="position:absolute;left:1759px;top:495px;" width="8" height="9" viewBox="0 0 8 9"><path d="M7 0.5V8.5L0.5 4.5z" fill="#222"/></svg>
<div class="t" style="left:1765px;top:572px;width:0;height:0;"><div class="t" style="left:-44px;top:-8px;width:88px;text-align:center;transform:rotate(-90deg);font-size:10.9px;color:#222;">Prethodni zadaci</div></div>
<div style="left:1876px;top:481px;width:26px;height:164px;background:#f3f3f3;border-radius:4px 0 0 4px;box-shadow:0 0 1px #bbb;"></div>
<svg style="position:absolute;left:1885px;top:495px;" width="8" height="9" viewBox="0 0 8 9"><path d="M0.5 0.5V8.5L7 4.5z" fill="#222"/></svg>
<div class="t" style="left:1889px;top:572px;width:0;height:0;"><div class="t" style="left:-44px;top:-8px;width:88px;text-align:center;transform:rotate(-90deg);font-size:10.9px;color:#b4b4b4;">Budući zadaci</div></div></body></html>
